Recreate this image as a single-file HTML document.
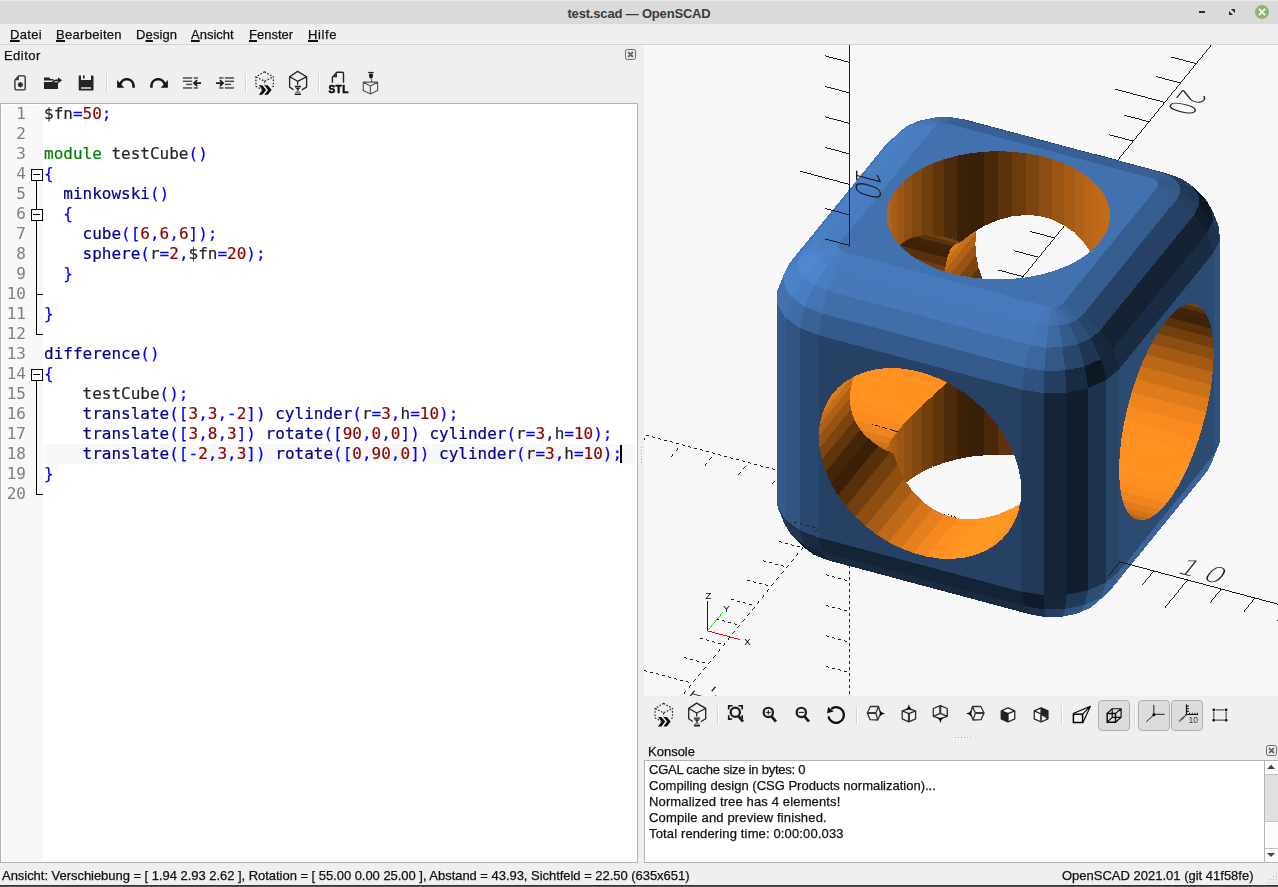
<!DOCTYPE html>
<html lang="de">
<head>
<meta charset="utf-8">
<title>test.scad — OpenSCAD</title>
<style>
html,body{margin:0;padding:0;}
body{width:1278px;height:887px;overflow:hidden;position:relative;background:#efefef;font-family:"Liberation Sans","DejaVu Sans",sans-serif;font-size:13px;color:#1a1a1a;}
.abs{position:absolute;}
.t{position:absolute;white-space:pre;line-height:16px;height:16px;will-change:transform;-webkit-text-stroke:0.25px #111;color:#111;}
#titlebar{left:0;top:0;width:1278px;height:24px;background:#dadada;}
#titlebar .hl{position:absolute;left:0;top:0;width:1278px;height:1px;background:#ebebeb;}
#title{will-change:auto;-webkit-text-stroke:0;left:0;width:1278px;top:6px;letter-spacing:-0.18px;text-align:center;font-weight:bold;color:#3a3a3a;font-size:13px;}
#menubar{left:0;top:24px;width:1278px;height:20px;background:#efefef;border-bottom:1px solid #d2d2d2;}
.menu{top:27px;}
u{text-decoration:underline;text-underline-offset:0.5px;text-decoration-thickness:1.5px;}
#edbox{left:0;top:103px;width:636px;height:758px;border:1px solid #b2b2b2;background:#fff;}
#gutter{left:2px;top:105px;width:41px;height:756px;background:#f8f8f8;}
.ln{position:absolute;left:2px;width:24px;text-align:right;height:20px;line-height:20px;font-family:"DejaVu Sans Mono","Liberation Mono",monospace;font-size:16px;color:#808080;}
.cl{position:absolute;left:44px;height:20px;line-height:20px;white-space:pre;font-family:"DejaVu Sans Mono","Liberation Mono",monospace;font-size:16px;color:#262626;-webkit-text-stroke:0.2px #262626;}
.k{color:#008000;-webkit-text-stroke:0.2px #008000;}
.f{color:#00008b;-webkit-text-stroke:0.2px #00008b;}
.o{color:#0000ff;-webkit-text-stroke:0.2px #0000ff;}
.n{color:#8b0000;-webkit-text-stroke:0.2px #8b0000;}
#curline{left:44px;top:444px;width:592px;height:20px;background:#f8f8f8;}
#caret{left:620px;top:445px;width:2px;height:18px;background:#000;}
#view{left:644px;top:45px;width:635px;height:651px;background:#f8f8f8;overflow:hidden;will-change:transform;}
#conbox{left:644px;top:760px;width:620px;height:101px;border:1px solid #b2b2b2;background:#fff;}
.con{left:649px;}
#status{left:0;top:864px;width:1278px;height:20px;}
#shadow{left:0;top:885px;width:1278px;height:2px;background:linear-gradient(#363636,#363636 50%,#545454 50%,#545454);}
</style>
</head>
<body>
<!-- title bar -->
<div id="titlebar" class="abs"><div class="hl"></div></div>
<div id="title" class="t">test.scad — OpenSCAD</div>
<!-- menu bar -->
<div id="menubar" class="abs"></div>
<div class="t menu" style="left:10px;letter-spacing:0.3px"><u>D</u>atei</div>
<div class="t menu" style="left:56px;letter-spacing:0.3px"><u>B</u>earbeiten</div>
<div class="t menu" style="left:136px;letter-spacing:0.12px">D<u>e</u>sign</div>
<div class="t menu" style="left:191px"><u>A</u>nsicht</div>
<div class="t menu" style="left:249px"><u>F</u>enster</div>
<div class="t menu" style="left:308px;letter-spacing:0.6px"><u>H</u>ilfe</div>
<!-- editor dock -->
<div class="t" style="left:3.5px;top:48px;letter-spacing:0.45px">Editor</div>
<div id="edbox" class="abs"></div>
<div id="gutter" class="abs"></div>
<div id="curline" class="abs"></div>
<div id="code" style="position:absolute;left:0;top:0;width:640px;height:864px;will-change:transform">
<div class="ln" style="top:104px">1</div>
<div class="cl" style="top:104px">$fn<span class="o">=</span><span class="n">50</span><span class="o">;</span></div>
<div class="ln" style="top:124px">2</div>
<div class="ln" style="top:144px">3</div>
<div class="cl" style="top:144px"><span class="k">module </span>testCube<span class="o">()</span></div>
<div class="ln" style="top:164px">4</div>
<div class="cl" style="top:164px"><span class="o">{</span></div>
<div class="ln" style="top:184px">5</div>
<div class="cl" style="top:184px">  <span class="f">minkowski</span><span class="o">()</span></div>
<div class="ln" style="top:204px">6</div>
<div class="cl" style="top:204px">  <span class="o">{</span></div>
<div class="ln" style="top:224px">7</div>
<div class="cl" style="top:224px">    <span class="f">cube</span><span class="o">([</span><span class="n">6</span><span class="o">,</span><span class="n">6</span><span class="o">,</span><span class="n">6</span><span class="o">]);</span></div>
<div class="ln" style="top:244px">8</div>
<div class="cl" style="top:244px">    <span class="f">sphere</span><span class="o">(</span>r<span class="o">=</span><span class="n">2</span><span class="o">,</span>$fn<span class="o">=</span><span class="n">20</span><span class="o">);</span></div>
<div class="ln" style="top:264px">9</div>
<div class="cl" style="top:264px">  <span class="o">}</span></div>
<div class="ln" style="top:284px">10</div>
<div class="ln" style="top:304px">11</div>
<div class="cl" style="top:304px"><span class="o">}</span></div>
<div class="ln" style="top:324px">12</div>
<div class="ln" style="top:344px">13</div>
<div class="cl" style="top:344px"><span class="f">difference</span><span class="o">()</span></div>
<div class="ln" style="top:364px">14</div>
<div class="cl" style="top:364px"><span class="o">{</span></div>
<div class="ln" style="top:384px">15</div>
<div class="cl" style="top:384px">    testCube<span class="o">();</span></div>
<div class="ln" style="top:404px">16</div>
<div class="cl" style="top:404px">    <span class="f">translate</span><span class="o">([</span><span class="n">3</span><span class="o">,</span><span class="n">3</span><span class="o">,-</span><span class="n">2</span><span class="o">]) </span><span class="f">cylinder</span><span class="o">(</span>r<span class="o">=</span><span class="n">3</span><span class="o">,</span>h<span class="o">=</span><span class="n">10</span><span class="o">);</span></div>
<div class="ln" style="top:424px">17</div>
<div class="cl" style="top:424px">    <span class="f">translate</span><span class="o">([</span><span class="n">3</span><span class="o">,</span><span class="n">8</span><span class="o">,</span><span class="n">3</span><span class="o">]) </span><span class="f">rotate</span><span class="o">([</span><span class="n">90</span><span class="o">,</span><span class="n">0</span><span class="o">,</span><span class="n">0</span><span class="o">]) </span><span class="f">cylinder</span><span class="o">(</span>r<span class="o">=</span><span class="n">3</span><span class="o">,</span>h<span class="o">=</span><span class="n">10</span><span class="o">);</span></div>
<div class="ln" style="top:444px">18</div>
<div class="cl" style="top:444px">    <span class="f">translate</span><span class="o">([-</span><span class="n">2</span><span class="o">,</span><span class="n">3</span><span class="o">,</span><span class="n">3</span><span class="o">]) </span><span class="f">rotate</span><span class="o">([</span><span class="n">0</span><span class="o">,</span><span class="n">90</span><span class="o">,</span><span class="n">0</span><span class="o">]) </span><span class="f">cylinder</span><span class="o">(</span>r<span class="o">=</span><span class="n">3</span><span class="o">,</span>h<span class="o">=</span><span class="n">10</span><span class="o">);</span></div>
<div class="ln" style="top:464px">19</div>
<div class="cl" style="top:464px"><span class="o">}</span></div>
<div class="ln" style="top:484px">20</div>
</div>
<div id="caret" class="abs"></div>
<!-- 3D view -->
<div id="view" class="abs">
<svg width="635" height="651" viewBox="0 0 635 651" shape-rendering="crispEdges" style="position:absolute;left:0;top:0;display:block">
<rect width="635" height="651" fill="#f8f8f8"/>
<g id="holes">
<polygon fill="#dd7a1c" stroke="#dd7a1c" stroke-width="2" points="455.7,197.4 460.8,189.9 464.2,182.1 465.9,174.1 465.9,166.1 464.1,158.1 460.5,150.3 455.3,142.8 448.5,135.8 440.2,129.3 430.6,123.4 419.8,118.3 407.9,114 395.2,110.6 381.8,108.2 368,106.7 354,106.2 340,106.7 326.2,108.3 312.9,110.8 300.2,114.2 288.4,118.6 277.6,123.7 268,129.6 259.8,136.1 253.1,143.2 248,150.7 244.5,158.5 242.8,166.5 242.9,174.6 244.7,182.5 248.2,190.3 253.4,197.8 260.2,204.8 268.5,211.3 278.2,217.2 289,222.3 300.9,226.6 313.6,230 327,232.4 340.8,233.9 354.8,234.4 368.8,233.9 382.6,232.3 395.9,229.8 408.6,226.4 420.4,222 431.2,216.9 440.7,211 449,204.5"/>
<path fill="#c26b19" stroke="#c26b19" stroke-width="1.6" stroke-linejoin="round" fill-rule="evenodd" d="M465.12,157.62L464.12,158.38L464.12,182.38L465.12,182.88L466.88,175.62L466.88,164.62Z"/>
<path fill="#c36b19" stroke="#c36b19" stroke-width="1.6" stroke-linejoin="round" fill-rule="evenodd" d="M461.88,149.88L460.62,150.62L460.62,190.38L461.62,191.38L465.12,183.38L464.88,182.88L463.88,182.38L463.88,158.38L465.12,157.38L465.12,156.88Z"/>
<path fill="#c16a18" stroke="#c16a18" stroke-width="1.6" stroke-linejoin="round" fill-rule="evenodd" d="M456.12,141.88L455.38,142.88L455.38,197.88L456.38,198.62L461.38,191.62L460.38,190.38L460.38,150.62L461.62,149.38L456.62,142.12Z"/>
<path fill="#be6818" stroke="#be6818" stroke-width="1.6" stroke-linejoin="round" fill-rule="evenodd" d="M449.12,134.38L448.62,135.38L448.62,204.88L449.62,205.62L456.12,198.88L455.12,197.88L455.12,142.88L456.12,141.62Z"/>
<path fill="#b86517" stroke="#b86517" stroke-width="1.6" stroke-linejoin="round" fill-rule="evenodd" d="M441.12,128.38L440.38,129.62L440.38,198.38L444.88,204.62L446.12,206.88L447.12,207.62L449.38,205.88L448.38,204.88L448.38,135.38L448.88,134.38Z"/>
<path fill="#b06116" stroke="#b06116" stroke-width="1.6" stroke-linejoin="round" fill-rule="evenodd" d="M431.38,122.38L430.62,123.62L430.62,188.12L440.12,198.12L440.12,129.62L440.88,128.12Z"/>
<path fill="#a65b15" stroke="#a65b15" stroke-width="1.6" stroke-linejoin="round" fill-rule="evenodd" d="M420.12,117.12L419.88,117.38L419.88,180.12L430.38,187.88L430.38,123.62L431.12,122.12Z"/>
<path fill="#9a5513" stroke="#9a5513" stroke-width="1.6" stroke-linejoin="round" fill-rule="evenodd" d="M408.12,112.88L408.12,174.38L419.62,180.12L419.62,117.38L419.88,117.12Z"/>
<path fill="#8c4d12" stroke="#8c4d12" stroke-width="1.6" stroke-linejoin="round" fill-rule="evenodd" d="M396.12,109.62L395.38,110.88L395.38,171.12L407.88,174.38L407.88,112.88Z"/>
<path fill="#7d4510" stroke="#7d4510" stroke-width="1.6" stroke-linejoin="round" fill-rule="evenodd" d="M382.38,107.12L381.88,107.88L381.88,169.88L395.12,170.88L395.12,110.88L395.88,109.62Z"/>
<path fill="#6d3c0e" stroke="#6d3c0e" stroke-width="1.6" stroke-linejoin="round" fill-rule="evenodd" d="M368.12,105.62L368.12,171.38L381.12,170.12L381.62,169.88L381.62,107.88L382.12,107.12Z"/>
<path fill="#5c330c" stroke="#5c330c" stroke-width="1.6" stroke-linejoin="round" fill-rule="evenodd" d="M367.88,105.62L354.12,105.12L354.12,175.12L367.88,171.38Z"/>
<path fill="#4a2909" stroke="#4a2909" stroke-width="1.6" stroke-linejoin="round" fill-rule="evenodd" d="M353.88,105.12L340.12,105.62L340.12,181.12L353.88,175.12Z"/>
<path fill="#381f07" stroke="#381f07" stroke-width="1.6" stroke-linejoin="round" fill-rule="evenodd" d="M339.88,105.62L326.38,107.12L326.38,189.38L339.88,181.12Z"/>
<path fill="#3c2108" stroke="#3c2108" stroke-width="1.6" stroke-linejoin="round" fill-rule="evenodd" d="M326.12,107.12L313.12,109.62L313.12,195.88L315.88,197.12L317.12,196.62L326.12,189.62Z"/>
<path fill="#4e2b0a" stroke="#4e2b0a" stroke-width="1.6" stroke-linejoin="round" fill-rule="evenodd" d="M312.88,109.62L300.12,112.88L300.38,113.38L300.38,191.88L312.12,195.62L312.88,195.62Z"/>
<path fill="#60350c" stroke="#60350c" stroke-width="1.6" stroke-linejoin="round" fill-rule="evenodd" d="M299.62,112.88L288.38,117.12L288.62,117.62L288.62,190.12L300.12,191.88L300.12,113.38Z"/>
<path fill="#713e0e" stroke="#713e0e" stroke-width="1.6" stroke-linejoin="round" fill-rule="evenodd" d="M288.12,117.38L277.12,122.38L277.62,123.38L277.62,190.38L288.38,190.12L288.38,117.62Z"/>
<path fill="#814710" stroke="#814710" stroke-width="1.6" stroke-linejoin="round" fill-rule="evenodd" d="M276.88,122.62L267.12,128.62L268.12,129.62L268.12,192.62L277.38,190.38L277.38,123.38Z"/>
<path fill="#8f4f12" stroke="#8f4f12" stroke-width="1.6" stroke-linejoin="round" fill-rule="evenodd" d="M267.12,128.88L266.38,129.12L258.88,135.12L259.88,136.12L259.88,196.88L267.88,192.62L267.88,129.62Z"/>
<path fill="#9d5614" stroke="#9d5614" stroke-width="1.6" stroke-linejoin="round" fill-rule="evenodd" d="M258.88,135.38L252.12,142.12L253.12,143.38L253.12,197.12L251.88,198.12L255.12,201.62L259.62,197.12L259.62,136.12Z"/>
<path fill="#a85d15" stroke="#a85d15" stroke-width="1.6" stroke-linejoin="round" fill-rule="evenodd" d="M251.88,142.38L246.62,150.12L248.12,150.88L248.12,189.62L246.62,190.38L251.62,197.88L252.12,197.88L252.88,197.12L252.88,143.38Z"/>
<path fill="#b26216" stroke="#b26216" stroke-width="1.6" stroke-linejoin="round" fill-rule="evenodd" d="M246.62,150.38L243.38,158.38L244.62,159.12L244.62,181.38L243.38,182.12L243.38,182.88L246.38,189.88L246.88,190.12L247.88,189.62L247.88,150.88Z"/>
<path fill="#b96617" stroke="#b96617" stroke-width="1.6" stroke-linejoin="round" fill-rule="evenodd" d="M243.38,158.62L241.88,165.12L241.88,176.12L242.38,177.38L243.12,181.88L244.38,181.38L244.38,159.12Z"/>
<path fill="#ec821e" stroke="#ec821e" stroke-width="1.6" stroke-linejoin="round" fill-rule="evenodd" d="M312.88,198.38L310.88,199.38L306.88,203.62L304.62,208.38Z"/>
<path fill="#da781c" stroke="#da781c" stroke-width="1.6" stroke-linejoin="round" fill-rule="evenodd" d="M320.38,194.12L316.38,197.38L313.38,198.12L304.62,208.62L303.88,210.12L303.12,213.88L302.12,216.62Z"/>
<path fill="#c56d19" stroke="#c56d19" stroke-width="1.6" stroke-linejoin="round" fill-rule="evenodd" d="M332.38,185.88L325.88,189.88L320.12,194.62L302.62,216.12L301.88,217.62L301.88,219.88L300.88,225.88L332.12,187.38Z"/>
<path fill="#af6016" stroke="#af6016" stroke-width="1.6" stroke-linejoin="round" fill-rule="evenodd" d="M332.12,187.62L300.88,226.12L300.38,227.88L306.62,229.38L307.88,227.38L331.38,198.62Z"/>
<path fill="#965313" stroke="#965313" stroke-width="1.6" stroke-linejoin="round" fill-rule="evenodd" d="M331.38,198.88L308.12,227.38L306.88,229.38L313.38,231.12L315.88,231.38L315.88,230.38L332.12,210.38Z"/>
<path fill="#7c4410" stroke="#7c4410" stroke-width="1.6" stroke-linejoin="round" fill-rule="evenodd" d="M332.12,210.62L316.12,230.38L316.12,231.62L325.62,233.38L334.12,222.88L334.38,221.12Z"/>
<path fill="#60350c" stroke="#60350c" stroke-width="1.6" stroke-linejoin="round" fill-rule="evenodd" d="M334.62,222.38L325.88,233.38L338.12,234.62L338.12,233.12Z"/>
<path fill="#733f0f" stroke="#733f0f" stroke-width="1.6" stroke-linejoin="round" fill-rule="evenodd" d="M271.38,214.62L276.12,217.62L287.88,223.38L299.62,227.62L300.12,227.62L300.62,226.88L300.62,225.12L301.38,221.38L276.38,214.88L275.38,214.38L273.38,213.88L272.62,214.12L272.38,213.62Z"/>
<path fill="#58310b" stroke="#58310b" stroke-width="1.6" stroke-linejoin="round" fill-rule="evenodd" d="M255.38,201.62L255.62,202.38L259.62,206.38L267.88,212.62L270.88,214.38L271.38,214.38L272.38,213.38L272.62,213.88L273.38,213.62L275.38,214.12L276.38,214.62L301.38,221.12L301.88,216.38L303.12,212.88L261.12,201.88L257.38,200.62L256.38,200.62Z"/>
<path fill="#3d2208" stroke="#3d2208" stroke-width="1.6" stroke-linejoin="round" fill-rule="evenodd" d="M256.62,200.38L302.38,212.62L303.12,212.62L303.88,209.38L305.62,206.12L264.38,195.12L263.62,195.12L259.88,197.12Z"/>
<path fill="#402308" stroke="#402308" stroke-width="1.6" stroke-linejoin="round" fill-rule="evenodd" d="M264.12,194.88L304.88,205.88L305.88,205.62L306.62,203.62L308.62,201.38L308.62,201.12L276.88,192.88L273.12,191.62L267.88,192.88Z"/>
<path fill="#5b320c" stroke="#5b320c" stroke-width="1.6" stroke-linejoin="round" fill-rule="evenodd" d="M273.38,191.62L308.88,201.12L310.88,199.12L312.62,198.38L312.62,198.12L283.62,190.38L276.88,190.62Z"/>
<path fill="#75410f" stroke="#75410f" stroke-width="1.6" stroke-linejoin="round" fill-rule="evenodd" d="M283.88,190.38L312.88,198.12L314.62,197.38L315.88,197.38L312.88,195.88L310.12,195.38L295.88,191.38L289.62,190.38Z"/>
<path fill="#8f4f12" stroke="#8f4f12" stroke-width="1.6" stroke-linejoin="round" fill-rule="evenodd" d="M298.12,191.88L307.88,194.38L301.38,192.38Z"/>
<path fill="#f8f8f8" stroke="#f8f8f8" stroke-width="1.6" stroke-linejoin="round" fill-rule="evenodd" d="M446.62,207.62L440.62,198.88L430.12,187.88L420.62,180.88L408.12,174.62L395.12,171.12L381.38,170.12L381.12,170.38L367.38,171.62L353.62,175.38L339.88,181.38L332.62,185.88L332.38,186.88L331.88,195.88L331.62,196.12L331.62,201.38L331.88,201.62L332.38,210.88L334.62,222.12L338.38,233.12L338.38,234.62L338.88,234.88L350.38,235.12L350.62,235.38L370.88,234.88L371.12,234.62L384.12,233.38L399.12,230.38L404.62,228.62L409.12,227.62L421.62,223.12L433.88,216.88L441.38,212.12L445.88,208.62Z"/>
<path fill="#c26b19" fill-rule="evenodd" d="M465.12,157.62L464.12,158.38L464.12,182.38L465.12,182.88L466.88,175.62L466.88,164.62Z"/>
<path fill="#c36b19" fill-rule="evenodd" d="M461.88,149.88L460.62,150.62L460.62,190.38L461.62,191.38L465.12,183.38L464.88,182.88L463.88,182.38L463.88,158.38L465.12,157.38L465.12,156.88Z"/>
<path fill="#c16a18" fill-rule="evenodd" d="M456.12,141.88L455.38,142.88L455.38,197.88L456.38,198.62L461.38,191.62L460.38,190.38L460.38,150.62L461.62,149.38L456.62,142.12Z"/>
<path fill="#be6818" fill-rule="evenodd" d="M449.12,134.38L448.62,135.38L448.62,204.88L449.62,205.62L456.12,198.88L455.12,197.88L455.12,142.88L456.12,141.62Z"/>
<path fill="#b86517" fill-rule="evenodd" d="M441.12,128.38L440.38,129.62L440.38,198.38L444.88,204.62L446.12,206.88L447.12,207.62L449.38,205.88L448.38,204.88L448.38,135.38L448.88,134.38Z"/>
<path fill="#b06116" fill-rule="evenodd" d="M431.38,122.38L430.62,123.62L430.62,188.12L440.12,198.12L440.12,129.62L440.88,128.12Z"/>
<path fill="#a65b15" fill-rule="evenodd" d="M420.12,117.12L419.88,117.38L419.88,180.12L430.38,187.88L430.38,123.62L431.12,122.12Z"/>
<path fill="#9a5513" fill-rule="evenodd" d="M408.12,112.88L408.12,174.38L419.62,180.12L419.62,117.38L419.88,117.12Z"/>
<path fill="#8c4d12" fill-rule="evenodd" d="M396.12,109.62L395.38,110.88L395.38,171.12L407.88,174.38L407.88,112.88Z"/>
<path fill="#7d4510" fill-rule="evenodd" d="M382.38,107.12L381.88,107.88L381.88,169.88L395.12,170.88L395.12,110.88L395.88,109.62Z"/>
<path fill="#6d3c0e" fill-rule="evenodd" d="M368.12,105.62L368.12,171.38L381.12,170.12L381.62,169.88L381.62,107.88L382.12,107.12Z"/>
<path fill="#5c330c" fill-rule="evenodd" d="M367.88,105.62L354.12,105.12L354.12,175.12L367.88,171.38Z"/>
<path fill="#4a2909" fill-rule="evenodd" d="M353.88,105.12L340.12,105.62L340.12,181.12L353.88,175.12Z"/>
<path fill="#381f07" fill-rule="evenodd" d="M339.88,105.62L326.38,107.12L326.38,189.38L339.88,181.12Z"/>
<path fill="#3c2108" fill-rule="evenodd" d="M326.12,107.12L313.12,109.62L313.12,195.88L315.88,197.12L317.12,196.62L326.12,189.62Z"/>
<path fill="#4e2b0a" fill-rule="evenodd" d="M312.88,109.62L300.12,112.88L300.38,113.38L300.38,191.88L312.12,195.62L312.88,195.62Z"/>
<path fill="#60350c" fill-rule="evenodd" d="M299.62,112.88L288.38,117.12L288.62,117.62L288.62,190.12L300.12,191.88L300.12,113.38Z"/>
<path fill="#713e0e" fill-rule="evenodd" d="M288.12,117.38L277.12,122.38L277.62,123.38L277.62,190.38L288.38,190.12L288.38,117.62Z"/>
<path fill="#814710" fill-rule="evenodd" d="M276.88,122.62L267.12,128.62L268.12,129.62L268.12,192.62L277.38,190.38L277.38,123.38Z"/>
<path fill="#8f4f12" fill-rule="evenodd" d="M267.12,128.88L266.38,129.12L258.88,135.12L259.88,136.12L259.88,196.88L267.88,192.62L267.88,129.62Z"/>
<path fill="#9d5614" fill-rule="evenodd" d="M258.88,135.38L252.12,142.12L253.12,143.38L253.12,197.12L251.88,198.12L255.12,201.62L259.62,197.12L259.62,136.12Z"/>
<path fill="#a85d15" fill-rule="evenodd" d="M251.88,142.38L246.62,150.12L248.12,150.88L248.12,189.62L246.62,190.38L251.62,197.88L252.12,197.88L252.88,197.12L252.88,143.38Z"/>
<path fill="#b26216" fill-rule="evenodd" d="M246.62,150.38L243.38,158.38L244.62,159.12L244.62,181.38L243.38,182.12L243.38,182.88L246.38,189.88L246.88,190.12L247.88,189.62L247.88,150.88Z"/>
<path fill="#b96617" fill-rule="evenodd" d="M243.38,158.62L241.88,165.12L241.88,176.12L242.38,177.38L243.12,181.88L244.38,181.38L244.38,159.12Z"/>
<path fill="#ec821e" fill-rule="evenodd" d="M312.88,198.38L310.88,199.38L306.88,203.62L304.62,208.38Z"/>
<path fill="#da781c" fill-rule="evenodd" d="M320.38,194.12L316.38,197.38L313.38,198.12L304.62,208.62L303.88,210.12L303.12,213.88L302.12,216.62Z"/>
<path fill="#c56d19" fill-rule="evenodd" d="M332.38,185.88L325.88,189.88L320.12,194.62L302.62,216.12L301.88,217.62L301.88,219.88L300.88,225.88L332.12,187.38Z"/>
<path fill="#af6016" fill-rule="evenodd" d="M332.12,187.62L300.88,226.12L300.38,227.88L306.62,229.38L307.88,227.38L331.38,198.62Z"/>
<path fill="#965313" fill-rule="evenodd" d="M331.38,198.88L308.12,227.38L306.88,229.38L313.38,231.12L315.88,231.38L315.88,230.38L332.12,210.38Z"/>
<path fill="#7c4410" fill-rule="evenodd" d="M332.12,210.62L316.12,230.38L316.12,231.62L325.62,233.38L334.12,222.88L334.38,221.12Z"/>
<path fill="#60350c" fill-rule="evenodd" d="M334.62,222.38L325.88,233.38L338.12,234.62L338.12,233.12Z"/>
<path fill="#733f0f" fill-rule="evenodd" d="M271.38,214.62L276.12,217.62L287.88,223.38L299.62,227.62L300.12,227.62L300.62,226.88L300.62,225.12L301.38,221.38L276.38,214.88L275.38,214.38L273.38,213.88L272.62,214.12L272.38,213.62Z"/>
<path fill="#58310b" fill-rule="evenodd" d="M255.38,201.62L255.62,202.38L259.62,206.38L267.88,212.62L270.88,214.38L271.38,214.38L272.38,213.38L272.62,213.88L273.38,213.62L275.38,214.12L276.38,214.62L301.38,221.12L301.88,216.38L303.12,212.88L261.12,201.88L257.38,200.62L256.38,200.62Z"/>
<path fill="#3d2208" fill-rule="evenodd" d="M256.62,200.38L302.38,212.62L303.12,212.62L303.88,209.38L305.62,206.12L264.38,195.12L263.62,195.12L259.88,197.12Z"/>
<path fill="#402308" fill-rule="evenodd" d="M264.12,194.88L304.88,205.88L305.88,205.62L306.62,203.62L308.62,201.38L308.62,201.12L276.88,192.88L273.12,191.62L267.88,192.88Z"/>
<path fill="#5b320c" fill-rule="evenodd" d="M273.38,191.62L308.88,201.12L310.88,199.12L312.62,198.38L312.62,198.12L283.62,190.38L276.88,190.62Z"/>
<path fill="#75410f" fill-rule="evenodd" d="M283.88,190.38L312.88,198.12L314.62,197.38L315.88,197.38L312.88,195.88L310.12,195.38L295.88,191.38L289.62,190.38Z"/>
<path fill="#8f4f12" fill-rule="evenodd" d="M298.12,191.88L307.88,194.38L301.38,192.38Z"/>
<path fill="#f8f8f8" fill-rule="evenodd" d="M446.62,207.62L440.62,198.88L430.12,187.88L420.62,180.88L408.12,174.62L395.12,171.12L381.38,170.12L381.12,170.38L367.38,171.62L353.62,175.38L339.88,181.38L332.62,185.88L332.38,186.88L331.88,195.88L331.62,196.12L331.62,201.38L331.88,201.62L332.38,210.88L334.62,222.12L338.38,233.12L338.38,234.62L338.88,234.88L350.38,235.12L350.62,235.38L370.88,234.88L371.12,234.62L384.12,233.38L399.12,230.38L404.62,228.62L409.12,227.62L421.62,223.12L433.88,216.88L441.38,212.12L445.88,208.62Z"/>
<polygon fill="#dd7a1c" stroke="#dd7a1c" stroke-width="2" points="377.3,445.6 376.5,433.9 374.2,421.9 370.2,410 364.8,398.1 358,386.6 349.9,375.5 340.6,365.2 330.3,355.7 319.2,347.2 307.4,339.8 295,333.6 282.4,328.8 269.7,325.4 257.1,323.5 244.8,323 232.9,324.1 221.8,326.7 211.5,330.7 202.2,336.1 194.1,342.7 187.3,350.6 181.9,359.6 178,369.5 175.6,380.1 174.8,391.4 175.6,403.1 178,415 181.9,427 187.3,438.8 194.1,450.4 202.2,461.4 211.5,471.7 221.8,481.2 232.9,489.8 244.8,497.2 257.1,503.3 269.7,508.1 282.4,511.5 295,513.5 307.4,513.9 319.2,512.8 330.3,510.3 340.6,506.3 349.9,500.9 358,494.2 364.8,486.3 370.2,477.3 374.2,467.5 376.5,456.8"/>
<path fill="#6d3c0e" stroke="#6d3c0e" stroke-width="1.6" stroke-linejoin="round" fill-rule="evenodd" d="M369.12,404.62L368.12,405.38L368.12,410.12L370.38,410.38L371.38,409.38Z"/>
<path fill="#5c330c" stroke="#5c330c" stroke-width="1.6" stroke-linejoin="round" fill-rule="evenodd" d="M354.88,380.38L354.12,381.38L354.12,409.62L367.88,410.12L367.88,405.38L369.12,404.12L365.38,396.12L359.12,385.88Z"/>
<path fill="#4a2909" stroke="#4a2909" stroke-width="1.6" stroke-linejoin="round" fill-rule="evenodd" d="M341.12,363.62L340.12,364.88L340.12,410.12L346.38,410.12L346.62,409.88L353.88,409.62L353.88,381.38L354.88,380.12L351.12,374.88Z"/>
<path fill="#381f07" stroke="#381f07" stroke-width="1.6" stroke-linejoin="round" fill-rule="evenodd" d="M327.12,351.38L326.38,352.88L326.38,411.88L326.62,411.62L339.88,410.38L339.88,364.88L340.88,363.62L333.12,356.12Z"/>
<path fill="#3c2108" stroke="#3c2108" stroke-width="1.6" stroke-linejoin="round" fill-rule="evenodd" d="M314.12,342.38L313.62,342.62L313.12,343.62L313.12,414.38L317.12,413.38L326.12,411.88L326.12,352.88L326.88,351.12L319.88,345.88Z"/>
<path fill="#4e2b0a" stroke="#4e2b0a" stroke-width="1.6" stroke-linejoin="round" fill-rule="evenodd" d="M304.12,336.62L303.62,336.88L303.12,337.88L300.38,340.12L300.38,417.62L312.88,414.38L312.88,343.62L313.62,342.12L308.12,338.62Z"/>
<path fill="#60350c" stroke="#60350c" stroke-width="1.6" stroke-linejoin="round" fill-rule="evenodd" d="M300.12,340.38L288.62,350.62L288.62,422.12L300.12,417.88Z"/>
<path fill="#713e0e" stroke="#713e0e" stroke-width="1.6" stroke-linejoin="round" fill-rule="evenodd" d="M288.38,350.88L277.62,360.88L277.62,427.12L288.38,422.12Z"/>
<path fill="#814710" stroke="#814710" stroke-width="1.6" stroke-linejoin="round" fill-rule="evenodd" d="M277.38,361.12L268.12,370.12L268.12,433.12L277.38,427.38Z"/>
<path fill="#8f4f12" stroke="#8f4f12" stroke-width="1.6" stroke-linejoin="round" fill-rule="evenodd" d="M267.88,370.38L259.88,378.88L259.88,433.12L262.62,437.38L267.88,433.38Z"/>
<path fill="#9d5614" stroke="#9d5614" stroke-width="1.6" stroke-linejoin="round" fill-rule="evenodd" d="M259.62,379.12L253.12,386.62L253.12,419.12L259.62,432.62Z"/>
<path fill="#a85d15" stroke="#a85d15" stroke-width="1.6" stroke-linejoin="round" fill-rule="evenodd" d="M252.88,387.12L248.12,393.38L248.12,407.88L249.38,408.38L249.88,409.12L252.88,418.38Z"/>
<path fill="#b26216" stroke="#b26216" stroke-width="1.6" stroke-linejoin="round" fill-rule="evenodd" d="M247.88,393.62L244.62,398.88L244.62,406.38L247.88,407.88Z"/>
<path fill="#b96617" stroke="#b96617" stroke-width="1.6" stroke-linejoin="round" fill-rule="evenodd" d="M244.38,399.62L242.88,403.38L242.88,405.62L244.38,406.12Z"/>
<path fill="#ec821e" stroke="#ec821e" stroke-width="1.6" stroke-linejoin="round" fill-rule="evenodd" d="M197.12,338.38L192.38,342.38L186.12,349.88L181.12,358.12L181.38,358.62L181.88,358.88L182.62,358.62L197.88,339.88Z"/>
<path fill="#da781c" stroke="#da781c" stroke-width="1.6" stroke-linejoin="round" fill-rule="evenodd" d="M206.88,331.88L201.38,334.88L197.38,338.12L198.12,339.88L182.88,358.62L182.38,359.12L180.88,358.62L176.88,368.12L177.12,369.12L178.12,369.12L206.88,333.88L207.38,333.12Z"/>
<path fill="#c56d19" stroke="#c56d19" stroke-width="1.6" stroke-linejoin="round" fill-rule="evenodd" d="M209.38,330.38L207.12,331.62L207.62,332.62L207.12,333.88L178.12,369.38L176.62,369.12L174.62,378.62L174.88,379.38L175.88,379.62L206.62,341.88L207.38,340.38L208.38,335.88L209.88,331.62Z"/>
<path fill="#af6016" stroke="#af6016" stroke-width="1.6" stroke-linejoin="round" fill-rule="evenodd" d="M207.12,341.38L175.88,379.88L174.62,379.38L173.88,391.12L174.88,391.12L205.88,353.12L206.12,347.38Z"/>
<path fill="#965313" stroke="#965313" stroke-width="1.6" stroke-linejoin="round" fill-rule="evenodd" d="M205.88,353.38L174.88,391.38L173.88,391.38L174.62,402.88L175.62,402.88L207.12,364.12L206.12,358.88Z"/>
<path fill="#7c4410" stroke="#7c4410" stroke-width="1.6" stroke-linejoin="round" fill-rule="evenodd" d="M207.12,364.38L175.62,403.12L174.62,403.12L174.62,404.62L176.38,412.62L176.62,415.12L178.12,414.62L210.12,375.38L210.38,374.12L208.62,370.12Z"/>
<path fill="#60350c" stroke="#60350c" stroke-width="1.6" stroke-linejoin="round" fill-rule="evenodd" d="M210.62,374.88L178.12,414.88L176.88,415.38L176.88,416.12L180.88,427.62L181.88,427.12L184.38,423.62L215.88,385.12L216.12,384.12L213.12,379.88Z"/>
<path fill="#442509" stroke="#442509" stroke-width="1.6" stroke-linejoin="round" fill-rule="evenodd" d="M216.38,384.62L184.62,423.62L182.12,427.12L180.88,427.88L186.12,439.12L187.88,438.12L224.12,393.38L219.12,388.12Z"/>
<path fill="#3b2007" stroke="#3b2007" stroke-width="1.6" stroke-linejoin="round" fill-rule="evenodd" d="M224.38,393.38L187.38,438.88L186.12,439.38L192.88,450.88L194.12,450.38L234.12,401.12L233.62,400.38L228.62,397.12Z"/>
<path fill="#57300b" stroke="#57300b" stroke-width="1.6" stroke-linejoin="round" fill-rule="evenodd" d="M239.38,404.12L234.38,401.12L194.38,450.38L192.88,451.12L201.12,462.38L246.12,407.38Z"/>
<path fill="#733f0f" stroke="#733f0f" stroke-width="1.6" stroke-linejoin="round" fill-rule="evenodd" d="M249.38,408.62L246.38,407.38L245.12,408.62L205.12,458.12L201.38,462.38L202.62,464.12L210.38,472.38L212.38,470.62L253.38,420.12Z"/>
<path fill="#8e4e12" stroke="#8e4e12" stroke-width="1.6" stroke-linejoin="round" fill-rule="evenodd" d="M253.38,420.38L214.88,467.88L210.62,472.62L220.88,482.12L221.88,481.38L221.88,480.88L259.88,434.38L260.12,433.88Z"/>
<path fill="#a75c15" stroke="#a75c15" stroke-width="1.6" stroke-linejoin="round" fill-rule="evenodd" d="M260.12,434.12L221.12,482.38L232.12,491.12L233.62,488.62L268.38,446.12Z"/>
<path fill="#be6918" stroke="#be6918" stroke-width="1.6" stroke-linejoin="round" fill-rule="evenodd" d="M268.62,446.12L233.12,489.62L232.62,491.38L243.88,498.12L277.88,456.38L277.88,455.88Z"/>
<path fill="#d4751b" stroke="#d4751b" stroke-width="1.6" stroke-linejoin="round" fill-rule="evenodd" d="M288.88,464.12L278.12,456.12L244.38,497.62L244.12,498.38L256.38,504.38L259.62,499.88Z"/>
<path fill="#e67f1d" stroke="#e67f1d" stroke-width="1.6" stroke-linejoin="round" fill-rule="evenodd" d="M300.62,469.88L289.12,464.12L257.88,502.38L256.62,504.62L268.88,509.12Z"/>
<path fill="#f6881f" stroke="#f6881f" stroke-width="1.6" stroke-linejoin="round" fill-rule="evenodd" d="M313.38,473.12L300.88,469.88L271.12,506.38L269.12,509.38L273.62,510.38L279.12,512.12L282.12,512.62L282.38,511.38Z"/>
<path fill="#ff8f21" stroke="#ff8f21" stroke-width="1.6" stroke-linejoin="round" fill-rule="evenodd" d="M326.62,474.38L313.62,473.38L282.62,511.38L282.38,512.88L294.88,514.38L294.88,513.38Z"/>
<path fill="#ff9422" stroke="#ff9422" stroke-width="1.6" stroke-linejoin="round" fill-rule="evenodd" d="M340.62,472.88L326.88,474.38L295.12,513.38L295.12,514.38L308.12,514.88L307.38,513.62Z"/>
<path fill="#ff9723" stroke="#ff9723" stroke-width="1.6" stroke-linejoin="round" fill-rule="evenodd" d="M354.62,469.12L340.88,472.88L307.62,513.62L308.12,514.62L309.62,514.88L309.88,514.62L319.38,513.88L319.12,512.62Z"/>
<path fill="#ff9823" stroke="#ff9823" stroke-width="1.6" stroke-linejoin="round" fill-rule="evenodd" d="M368.62,463.12L356.38,468.38L354.12,469.88L319.38,512.62L319.62,513.88L330.38,511.62L330.62,509.62Z"/>
<path fill="#ff9823" stroke="#ff9823" stroke-width="1.6" stroke-linejoin="round" fill-rule="evenodd" d="M377.38,458.62L375.62,458.88L369.38,462.62L367.88,464.12L330.88,509.62L330.62,511.62L341.38,507.38L340.88,506.38L341.12,505.38L373.62,465.38L374.62,464.38L375.88,464.88L376.12,464.62Z"/>
<path fill="#ff9522" stroke="#ff9522" stroke-width="1.6" stroke-linejoin="round" fill-rule="evenodd" d="M375.62,464.88L374.62,464.62L342.38,504.12L341.12,505.88L341.62,507.38L350.88,501.88L349.88,500.88L350.88,499.38L371.12,474.62L372.38,475.12L375.12,468.62L375.88,465.62Z"/>
<path fill="#ff9021" stroke="#ff9021" stroke-width="1.6" stroke-linejoin="round" fill-rule="evenodd" d="M371.12,474.88L351.12,499.38L350.12,500.62L350.88,501.62L351.88,501.12L359.62,494.38L358.62,493.12L359.12,492.62L360.38,493.12L360.88,492.88L359.88,491.62L360.62,490.88L361.38,491.12L360.88,490.38L365.62,484.62L366.88,485.12L367.38,484.88L371.62,477.38L372.38,475.38Z"/>
<path fill="#fa8a20" stroke="#fa8a20" stroke-width="1.6" stroke-linejoin="round" fill-rule="evenodd" d="M359.12,492.88L358.88,493.38L359.88,494.12L360.38,493.38ZM367.12,485.38L366.12,484.88L365.38,485.12L361.12,490.38L361.38,490.88L360.12,491.62L360.88,492.62L364.62,488.88Z"/>
<path fill="#fb8a20" stroke="#fb8a20" stroke-width="1.6" stroke-linejoin="round" fill-rule="evenodd" d="M207.38,364.88L208.88,370.12L210.88,375.12L248.62,385.12L252.38,386.38L253.12,386.38L259.62,378.88Z"/>
<path fill="#ff8f21" stroke="#ff8f21" stroke-width="1.6" stroke-linejoin="round" fill-rule="evenodd" d="M206.12,353.62L206.38,358.88L206.88,360.62L207.38,364.62L249.88,375.88L253.62,377.12L259.88,378.62L267.88,370.12Z"/>
<path fill="#ff9221" stroke="#ff9221" stroke-width="1.6" stroke-linejoin="round" fill-rule="evenodd" d="M207.12,341.88L206.88,345.38L206.38,347.38L206.12,353.38L207.38,353.88L210.12,354.38L211.12,354.88L213.88,355.38L214.88,355.88L217.62,356.38L218.62,356.88L221.38,357.38L222.38,357.88L225.12,358.38L228.88,359.62L231.62,360.12L267.38,369.88L268.12,369.88L277.38,360.88L277.38,360.62L271.88,359.38L270.88,358.88L268.12,358.38L264.38,357.12L261.62,356.62L260.62,356.12L257.88,355.62L256.88,355.12L254.12,354.62L253.12,354.12L250.38,353.62L249.38,353.12L246.62,352.62L242.88,351.38L240.12,350.88Z"/>
<path fill="#ff9322" stroke="#ff9322" stroke-width="1.6" stroke-linejoin="round" fill-rule="evenodd" d="M207.12,341.62L277.62,360.62L288.38,350.62L212.88,330.62L212.12,329.12L209.62,330.12L210.12,331.62Z"/>
<path fill="#ff9221" stroke="#ff9221" stroke-width="1.6" stroke-linejoin="round" fill-rule="evenodd" d="M212.38,328.88L212.88,330.38L287.62,350.38L288.62,350.38L300.12,340.12L238.62,323.88L238.38,322.62L231.38,323.12L229.12,323.88L222.62,325.12Z"/>
<path fill="#ff8f21" stroke="#ff8f21" stroke-width="1.6" stroke-linejoin="round" fill-rule="evenodd" d="M238.62,322.62L238.62,323.62L294.62,338.38L299.38,339.88L300.38,339.88L303.12,337.62L303.62,336.38L295.62,332.38L284.38,328.12L270.88,324.38L258.88,322.38L242.62,322.12Z"/>
<path fill="#bc6818" stroke="#bc6818" stroke-width="1.6" stroke-linejoin="round" fill-rule="evenodd" d="M235.62,401.62L242.62,405.38L242.38,403.38Z"/>
<path fill="#d0731a" stroke="#d0731a" stroke-width="1.6" stroke-linejoin="round" fill-rule="evenodd" d="M225.12,393.88L229.62,397.62L234.38,400.88L236.12,401.62L238.88,402.12L242.62,403.38L244.38,399.38L243.12,398.62Z"/>
<path fill="#e17c1d" stroke="#e17c1d" stroke-width="1.6" stroke-linejoin="round" fill-rule="evenodd" d="M217.12,385.12L219.38,388.12L224.88,393.62L244.38,398.88L247.88,393.38Z"/>
<path fill="#f0841e" stroke="#f0841e" stroke-width="1.6" stroke-linejoin="round" fill-rule="evenodd" d="M211.12,375.38L213.38,379.88L216.38,384.38L217.38,385.12L221.88,386.12L247.38,393.12L248.12,393.12L252.88,386.62Z"/>
<path fill="#f8f8f8" stroke="#f8f8f8" stroke-width="1.6" stroke-linejoin="round" fill-rule="evenodd" d="M377.62,458.38L378.12,448.62L378.38,448.38L378.38,442.88L378.12,442.62L377.62,432.38L375.12,420.62L371.38,409.88L370.38,410.62L362.38,410.38L362.12,410.12L355.12,410.12L354.88,409.88L340.12,410.38L339.88,410.62L326.62,411.88L310.38,415.12L300.38,417.88L288.12,422.38L277.62,427.38L267.62,433.62L262.88,437.38L268.12,445.38L278.62,456.38L288.88,463.88L300.62,469.62L313.62,473.12L327.38,474.12L327.62,473.88L341.38,472.62L355.12,468.88L368.38,463.12L376.12,458.38Z"/>
<path fill="#6d3c0e" fill-rule="evenodd" d="M369.12,404.62L368.12,405.38L368.12,410.12L370.38,410.38L371.38,409.38Z"/>
<path fill="#5c330c" fill-rule="evenodd" d="M354.88,380.38L354.12,381.38L354.12,409.62L367.88,410.12L367.88,405.38L369.12,404.12L365.38,396.12L359.12,385.88Z"/>
<path fill="#4a2909" fill-rule="evenodd" d="M341.12,363.62L340.12,364.88L340.12,410.12L346.38,410.12L346.62,409.88L353.88,409.62L353.88,381.38L354.88,380.12L351.12,374.88Z"/>
<path fill="#381f07" fill-rule="evenodd" d="M327.12,351.38L326.38,352.88L326.38,411.88L326.62,411.62L339.88,410.38L339.88,364.88L340.88,363.62L333.12,356.12Z"/>
<path fill="#3c2108" fill-rule="evenodd" d="M314.12,342.38L313.62,342.62L313.12,343.62L313.12,414.38L317.12,413.38L326.12,411.88L326.12,352.88L326.88,351.12L319.88,345.88Z"/>
<path fill="#4e2b0a" fill-rule="evenodd" d="M304.12,336.62L303.62,336.88L303.12,337.88L300.38,340.12L300.38,417.62L312.88,414.38L312.88,343.62L313.62,342.12L308.12,338.62Z"/>
<path fill="#60350c" fill-rule="evenodd" d="M300.12,340.38L288.62,350.62L288.62,422.12L300.12,417.88Z"/>
<path fill="#713e0e" fill-rule="evenodd" d="M288.38,350.88L277.62,360.88L277.62,427.12L288.38,422.12Z"/>
<path fill="#814710" fill-rule="evenodd" d="M277.38,361.12L268.12,370.12L268.12,433.12L277.38,427.38Z"/>
<path fill="#8f4f12" fill-rule="evenodd" d="M267.88,370.38L259.88,378.88L259.88,433.12L262.62,437.38L267.88,433.38Z"/>
<path fill="#9d5614" fill-rule="evenodd" d="M259.62,379.12L253.12,386.62L253.12,419.12L259.62,432.62Z"/>
<path fill="#a85d15" fill-rule="evenodd" d="M252.88,387.12L248.12,393.38L248.12,407.88L249.38,408.38L249.88,409.12L252.88,418.38Z"/>
<path fill="#b26216" fill-rule="evenodd" d="M247.88,393.62L244.62,398.88L244.62,406.38L247.88,407.88Z"/>
<path fill="#b96617" fill-rule="evenodd" d="M244.38,399.62L242.88,403.38L242.88,405.62L244.38,406.12Z"/>
<path fill="#ec821e" fill-rule="evenodd" d="M197.12,338.38L192.38,342.38L186.12,349.88L181.12,358.12L181.38,358.62L181.88,358.88L182.62,358.62L197.88,339.88Z"/>
<path fill="#da781c" fill-rule="evenodd" d="M206.88,331.88L201.38,334.88L197.38,338.12L198.12,339.88L182.88,358.62L182.38,359.12L180.88,358.62L176.88,368.12L177.12,369.12L178.12,369.12L206.88,333.88L207.38,333.12Z"/>
<path fill="#c56d19" fill-rule="evenodd" d="M209.38,330.38L207.12,331.62L207.62,332.62L207.12,333.88L178.12,369.38L176.62,369.12L174.62,378.62L174.88,379.38L175.88,379.62L206.62,341.88L207.38,340.38L208.38,335.88L209.88,331.62Z"/>
<path fill="#af6016" fill-rule="evenodd" d="M207.12,341.38L175.88,379.88L174.62,379.38L173.88,391.12L174.88,391.12L205.88,353.12L206.12,347.38Z"/>
<path fill="#965313" fill-rule="evenodd" d="M205.88,353.38L174.88,391.38L173.88,391.38L174.62,402.88L175.62,402.88L207.12,364.12L206.12,358.88Z"/>
<path fill="#7c4410" fill-rule="evenodd" d="M207.12,364.38L175.62,403.12L174.62,403.12L174.62,404.62L176.38,412.62L176.62,415.12L178.12,414.62L210.12,375.38L210.38,374.12L208.62,370.12Z"/>
<path fill="#60350c" fill-rule="evenodd" d="M210.62,374.88L178.12,414.88L176.88,415.38L176.88,416.12L180.88,427.62L181.88,427.12L184.38,423.62L215.88,385.12L216.12,384.12L213.12,379.88Z"/>
<path fill="#442509" fill-rule="evenodd" d="M216.38,384.62L184.62,423.62L182.12,427.12L180.88,427.88L186.12,439.12L187.88,438.12L224.12,393.38L219.12,388.12Z"/>
<path fill="#3b2007" fill-rule="evenodd" d="M224.38,393.38L187.38,438.88L186.12,439.38L192.88,450.88L194.12,450.38L234.12,401.12L233.62,400.38L228.62,397.12Z"/>
<path fill="#57300b" fill-rule="evenodd" d="M239.38,404.12L234.38,401.12L194.38,450.38L192.88,451.12L201.12,462.38L246.12,407.38Z"/>
<path fill="#733f0f" fill-rule="evenodd" d="M249.38,408.62L246.38,407.38L245.12,408.62L205.12,458.12L201.38,462.38L202.62,464.12L210.38,472.38L212.38,470.62L253.38,420.12Z"/>
<path fill="#8e4e12" fill-rule="evenodd" d="M253.38,420.38L214.88,467.88L210.62,472.62L220.88,482.12L221.88,481.38L221.88,480.88L259.88,434.38L260.12,433.88Z"/>
<path fill="#a75c15" fill-rule="evenodd" d="M260.12,434.12L221.12,482.38L232.12,491.12L233.62,488.62L268.38,446.12Z"/>
<path fill="#be6918" fill-rule="evenodd" d="M268.62,446.12L233.12,489.62L232.62,491.38L243.88,498.12L277.88,456.38L277.88,455.88Z"/>
<path fill="#d4751b" fill-rule="evenodd" d="M288.88,464.12L278.12,456.12L244.38,497.62L244.12,498.38L256.38,504.38L259.62,499.88Z"/>
<path fill="#e67f1d" fill-rule="evenodd" d="M300.62,469.88L289.12,464.12L257.88,502.38L256.62,504.62L268.88,509.12Z"/>
<path fill="#f6881f" fill-rule="evenodd" d="M313.38,473.12L300.88,469.88L271.12,506.38L269.12,509.38L273.62,510.38L279.12,512.12L282.12,512.62L282.38,511.38Z"/>
<path fill="#ff8f21" fill-rule="evenodd" d="M326.62,474.38L313.62,473.38L282.62,511.38L282.38,512.88L294.88,514.38L294.88,513.38Z"/>
<path fill="#ff9422" fill-rule="evenodd" d="M340.62,472.88L326.88,474.38L295.12,513.38L295.12,514.38L308.12,514.88L307.38,513.62Z"/>
<path fill="#ff9723" fill-rule="evenodd" d="M354.62,469.12L340.88,472.88L307.62,513.62L308.12,514.62L309.62,514.88L309.88,514.62L319.38,513.88L319.12,512.62Z"/>
<path fill="#ff9823" fill-rule="evenodd" d="M368.62,463.12L356.38,468.38L354.12,469.88L319.38,512.62L319.62,513.88L330.38,511.62L330.62,509.62Z"/>
<path fill="#ff9823" fill-rule="evenodd" d="M377.38,458.62L375.62,458.88L369.38,462.62L367.88,464.12L330.88,509.62L330.62,511.62L341.38,507.38L340.88,506.38L341.12,505.38L373.62,465.38L374.62,464.38L375.88,464.88L376.12,464.62Z"/>
<path fill="#ff9522" fill-rule="evenodd" d="M375.62,464.88L374.62,464.62L342.38,504.12L341.12,505.88L341.62,507.38L350.88,501.88L349.88,500.88L350.88,499.38L371.12,474.62L372.38,475.12L375.12,468.62L375.88,465.62Z"/>
<path fill="#ff9021" fill-rule="evenodd" d="M371.12,474.88L351.12,499.38L350.12,500.62L350.88,501.62L351.88,501.12L359.62,494.38L358.62,493.12L359.12,492.62L360.38,493.12L360.88,492.88L359.88,491.62L360.62,490.88L361.38,491.12L360.88,490.38L365.62,484.62L366.88,485.12L367.38,484.88L371.62,477.38L372.38,475.38Z"/>
<path fill="#fa8a20" fill-rule="evenodd" d="M359.12,492.88L358.88,493.38L359.88,494.12L360.38,493.38ZM367.12,485.38L366.12,484.88L365.38,485.12L361.12,490.38L361.38,490.88L360.12,491.62L360.88,492.62L364.62,488.88Z"/>
<path fill="#fb8a20" fill-rule="evenodd" d="M207.38,364.88L208.88,370.12L210.88,375.12L248.62,385.12L252.38,386.38L253.12,386.38L259.62,378.88Z"/>
<path fill="#ff8f21" fill-rule="evenodd" d="M206.12,353.62L206.38,358.88L206.88,360.62L207.38,364.62L249.88,375.88L253.62,377.12L259.88,378.62L267.88,370.12Z"/>
<path fill="#ff9221" fill-rule="evenodd" d="M207.12,341.88L206.88,345.38L206.38,347.38L206.12,353.38L207.38,353.88L210.12,354.38L211.12,354.88L213.88,355.38L214.88,355.88L217.62,356.38L218.62,356.88L221.38,357.38L222.38,357.88L225.12,358.38L228.88,359.62L231.62,360.12L267.38,369.88L268.12,369.88L277.38,360.88L277.38,360.62L271.88,359.38L270.88,358.88L268.12,358.38L264.38,357.12L261.62,356.62L260.62,356.12L257.88,355.62L256.88,355.12L254.12,354.62L253.12,354.12L250.38,353.62L249.38,353.12L246.62,352.62L242.88,351.38L240.12,350.88Z"/>
<path fill="#ff9322" fill-rule="evenodd" d="M207.12,341.62L277.62,360.62L288.38,350.62L212.88,330.62L212.12,329.12L209.62,330.12L210.12,331.62Z"/>
<path fill="#ff9221" fill-rule="evenodd" d="M212.38,328.88L212.88,330.38L287.62,350.38L288.62,350.38L300.12,340.12L238.62,323.88L238.38,322.62L231.38,323.12L229.12,323.88L222.62,325.12Z"/>
<path fill="#ff8f21" fill-rule="evenodd" d="M238.62,322.62L238.62,323.62L294.62,338.38L299.38,339.88L300.38,339.88L303.12,337.62L303.62,336.38L295.62,332.38L284.38,328.12L270.88,324.38L258.88,322.38L242.62,322.12Z"/>
<path fill="#bc6818" fill-rule="evenodd" d="M235.62,401.62L242.62,405.38L242.38,403.38Z"/>
<path fill="#d0731a" fill-rule="evenodd" d="M225.12,393.88L229.62,397.62L234.38,400.88L236.12,401.62L238.88,402.12L242.62,403.38L244.38,399.38L243.12,398.62Z"/>
<path fill="#e17c1d" fill-rule="evenodd" d="M217.12,385.12L219.38,388.12L224.88,393.62L244.38,398.88L247.88,393.38Z"/>
<path fill="#f0841e" fill-rule="evenodd" d="M211.12,375.38L213.38,379.88L216.38,384.38L217.38,385.12L221.88,386.12L247.38,393.12L248.12,393.12L252.88,386.62Z"/>
<path fill="#f8f8f8" fill-rule="evenodd" d="M377.62,458.38L378.12,448.62L378.38,448.38L378.38,442.88L378.12,442.62L377.62,432.38L375.12,420.62L371.38,409.88L370.38,410.62L362.38,410.38L362.12,410.12L355.12,410.12L354.88,409.88L340.12,410.38L339.88,410.62L326.62,411.88L310.38,415.12L300.38,417.88L288.12,422.38L277.62,427.38L267.62,433.62L262.88,437.38L268.12,445.38L278.62,456.38L288.88,463.88L300.62,469.62L313.62,473.12L327.38,474.12L327.62,473.88L341.38,472.62L355.12,468.88L368.38,463.12L376.12,458.38Z"/>
<polygon fill="#dd7a1c" stroke="#dd7a1c" stroke-width="2" points="522.4,458.6 528.3,450.6 534.1,441.3 539.7,430.8 545.1,419.3 550.1,407 554.7,394 558.7,380.6 562.2,367 565.1,353.5 567.3,340.1 568.7,327.1 569.5,314.8 569.5,303.3 568.7,292.8 567.3,283.5 565.1,275.5 562.2,268.9 558.7,263.9 554.7,260.5 550.1,258.8 545.1,258.8 539.7,260.5 534.1,263.9 528.3,268.9 522.4,275.5 516.4,283.5 510.6,292.8 505,303.3 499.6,314.8 494.6,327.1 490,340.1 486,353.5 482.5,367 479.6,380.6 477.4,394 476,407 475.2,419.3 475.2,430.8 476,441.3 477.4,450.6 479.6,458.6 482.5,465.1 486,470.2 490,473.5 494.6,475.2 499.6,475.2 505,473.5 510.6,470.2 516.4,465.1"/>
<path fill="#fb8a20" stroke="#fb8a20" stroke-width="1.6" stroke-linejoin="round" fill-rule="evenodd" d="M474.62,437.38L474.88,443.12L475.62,446.38L477.62,446.38L481.38,447.62L522.12,458.38L523.38,459.62L529.38,451.62L527.38,450.38L486.38,439.62L475.88,436.62Z"/>
<path fill="#ff8f21" stroke="#ff8f21" stroke-width="1.6" stroke-linejoin="round" fill-rule="evenodd" d="M474.12,425.62L474.38,437.12L475.88,436.38L486.38,439.38L528.12,450.38L529.12,451.38L529.62,451.38L535.38,442.12L532.62,440.88L479.38,426.88L475.62,425.62Z"/>
<path fill="#ff9221" stroke="#ff9221" stroke-width="1.6" stroke-linejoin="round" fill-rule="evenodd" d="M474.38,413.62L474.12,425.38L475.62,425.38L479.38,426.62L532.62,440.62L535.12,441.88L535.62,441.62L540.88,431.38L540.12,430.88L518.62,425.38L475.62,413.62Z"/>
<path fill="#ff9322" stroke="#ff9322" stroke-width="1.6" stroke-linejoin="round" fill-rule="evenodd" d="M475.38,400.62L474.38,413.38L475.62,413.38L518.62,425.12L540.12,430.62L540.88,431.12L546.12,420.62L545.88,419.88L542.62,418.62L479.12,401.88Z"/>
<path fill="#ff9221" stroke="#ff9221" stroke-width="1.6" stroke-linejoin="round" fill-rule="evenodd" d="M477.12,387.88L475.62,398.62L475.62,400.38L476.38,400.88L544.38,418.88L546.12,419.88L546.62,419.38L551.12,408.12L550.88,407.62L549.62,406.88L484.38,389.62L480.62,388.38L477.38,387.62Z"/>
<path fill="#ff8f21" stroke="#ff8f21" stroke-width="1.6" stroke-linejoin="round" fill-rule="evenodd" d="M479.62,374.12L477.38,386.38L477.62,387.62L480.62,388.12L484.38,389.38L549.62,406.62L551.12,407.62L555.88,394.62L555.62,394.12L552.38,393.62L551.38,393.12L548.62,392.62L547.62,392.12L544.88,391.62L543.88,391.12L541.12,390.62L540.12,390.12Z"/>
<path fill="#fa8a20" stroke="#fa8a20" stroke-width="1.6" stroke-linejoin="round" fill-rule="evenodd" d="M482.88,360.12L479.88,372.88L480.12,374.12L483.12,374.62L484.12,375.12L486.88,375.62L490.62,376.88L508.38,381.38L552.38,393.38L555.88,394.12L559.88,381.12L559.12,380.62L556.88,380.38L520.38,370.38L502.62,365.88L498.88,364.62L484.88,361.12Z"/>
<path fill="#ef831e" stroke="#ef831e" stroke-width="1.6" stroke-linejoin="round" fill-rule="evenodd" d="M486.62,346.62L484.62,352.88L482.88,359.88L484.88,360.88L498.88,364.38L502.62,365.62L520.38,370.12L556.88,380.12L559.12,380.38L559.88,380.88L563.38,367.12L561.62,367.12L560.62,366.62L550.38,364.12L546.62,362.88L489.62,347.88Z"/>
<path fill="#e07b1c" stroke="#e07b1c" stroke-width="1.6" stroke-linejoin="round" fill-rule="evenodd" d="M486.88,345.88L486.88,346.38L488.12,347.12L535.38,359.62L536.38,360.12L539.12,360.62L540.12,361.12L542.88,361.62L543.88,362.12L546.62,362.62L554.12,364.88L556.88,365.38L557.88,365.88L560.62,366.38L561.62,366.88L563.38,366.88L563.62,366.38L563.88,364.12L566.12,354.88L566.12,354.12L565.38,353.62L513.38,339.88L505.88,337.62L503.12,337.12L502.12,336.62L499.38,336.12L498.38,335.62L495.62,335.12L494.62,334.62L491.88,334.12L491.12,333.62Z"/>
<path fill="#ce721a" stroke="#ce721a" stroke-width="1.6" stroke-linejoin="round" fill-rule="evenodd" d="M491.12,333.12L491.88,333.88L562.88,352.62L566.12,353.88L566.38,353.62L568.38,340.12L566.62,340.12L560.88,338.38L496.62,321.38L495.88,320.88L493.62,325.88Z"/>
<path fill="#ba6718" stroke="#ba6718" stroke-width="1.6" stroke-linejoin="round" fill-rule="evenodd" d="M495.88,320.38L496.12,320.88L497.38,321.38L560.88,338.12L566.62,339.88L568.62,339.62L569.62,327.12L566.88,326.88L551.88,322.62L502.38,309.62L501.12,308.88L499.88,310.88Z"/>
<path fill="#a45a15" stroke="#a45a15" stroke-width="1.6" stroke-linejoin="round" fill-rule="evenodd" d="M501.12,308.12L501.12,308.62L502.38,309.38L508.88,310.88L512.62,312.12L530.38,316.62L566.88,326.62L569.62,326.88L570.38,314.88L567.88,314.62L552.88,310.38L508.12,298.62L506.62,297.88L506.12,298.12Z"/>
<path fill="#8c4d12" stroke="#8c4d12" stroke-width="1.6" stroke-linejoin="round" fill-rule="evenodd" d="M506.38,297.62L510.88,299.12L552.88,310.12L567.88,314.38L570.38,314.62L570.38,303.38L568.88,303.38L555.62,299.62L552.88,299.12L549.12,297.88L513.62,288.62L512.38,287.88L511.88,288.12Z"/>
<path fill="#733f0f" stroke="#733f0f" stroke-width="1.6" stroke-linejoin="round" fill-rule="evenodd" d="M512.38,287.38L512.62,287.88L513.62,288.38L527.62,291.88L567.88,302.88L570.38,303.12L569.62,292.88L566.12,292.38L558.62,290.12L519.62,279.88L518.62,278.62L517.88,279.12L515.62,282.12Z"/>
<path fill="#58310b" stroke="#58310b" stroke-width="1.6" stroke-linejoin="round" fill-rule="evenodd" d="M518.62,278.12L519.62,279.62L558.62,289.88L566.12,292.12L569.62,292.62L568.62,283.62L565.88,283.38L550.88,279.12L525.88,272.62L524.62,271.38L522.38,273.38Z"/>
<path fill="#3d2208" stroke="#3d2208" stroke-width="1.6" stroke-linejoin="round" fill-rule="evenodd" d="M524.38,271.12L526.62,272.62L550.88,278.88L565.88,283.12L568.38,283.38L568.38,282.38L566.38,275.12L564.62,275.62L553.38,272.38L531.38,266.62L530.12,265.38Z"/>
<path fill="#402308" stroke="#402308" stroke-width="1.6" stroke-linejoin="round" fill-rule="evenodd" d="M530.38,265.38L531.38,266.38L553.38,272.12L564.62,275.38L565.38,275.38L566.12,274.88L563.38,268.62L562.62,269.12L560.12,268.62L545.12,264.38L537.12,262.38L536.12,261.38L533.38,262.62Z"/>
<path fill="#5b320c" stroke="#5b320c" stroke-width="1.6" stroke-linejoin="round" fill-rule="evenodd" d="M536.12,261.12L537.12,262.12L545.12,264.12L562.12,268.88L563.38,268.38L559.88,263.12L558.62,264.12L542.88,259.88L541.88,258.62L539.12,259.38Z"/>
<path fill="#75410f" stroke="#75410f" stroke-width="1.6" stroke-linejoin="round" fill-rule="evenodd" d="M542.12,258.62L542.88,259.62L558.62,263.88L559.62,262.88L555.12,259.38L554.62,260.38L554.12,260.62L553.88,259.88L553.62,260.38L548.62,259.12L548.38,257.88L543.88,257.88Z"/>
<path fill="#8f4f12" stroke="#8f4f12" stroke-width="1.6" stroke-linejoin="round" fill-rule="evenodd" d="M548.62,257.88L548.62,258.88L553.62,260.12L553.88,259.62L554.12,260.38L554.88,259.38L551.38,257.88Z"/>
<path fill="#a65c15" stroke="#a65c15" stroke-width="1.6" stroke-linejoin="round" fill-rule="evenodd" d="M488.12,473.62L488.38,474.12L489.62,474.88L493.38,476.12L499.12,476.12L499.12,475.12L489.12,472.62Z"/>
<path fill="#bc6818" stroke="#bc6818" stroke-width="1.6" stroke-linejoin="round" fill-rule="evenodd" d="M483.12,468.62L484.62,470.88L487.88,473.62L489.12,472.38L499.12,474.88L499.38,476.12L500.88,476.12L505.38,474.88L504.62,473.62L503.38,473.12L500.62,472.62L484.62,468.12Z"/>
<path fill="#d0731a" stroke="#d0731a" stroke-width="1.6" stroke-linejoin="round" fill-rule="evenodd" d="M479.88,462.88L481.62,466.62L482.88,468.38L484.62,467.88L493.12,470.38L503.38,472.88L504.62,473.38L505.62,474.62L510.88,471.62L510.38,470.12L481.38,462.38Z"/>
<path fill="#e17c1d" stroke="#e17c1d" stroke-width="1.6" stroke-linejoin="round" fill-rule="evenodd" d="M477.62,455.88L478.38,459.12L479.88,462.62L481.38,462.12L510.38,469.88L511.12,471.38L517.12,466.38L516.12,465.12L491.12,458.62L478.88,455.12Z"/>
<path fill="#f0841e" stroke="#f0841e" stroke-width="1.6" stroke-linejoin="round" fill-rule="evenodd" d="M475.62,446.62L476.12,450.62L477.38,455.62L478.88,454.88L491.12,458.38L516.12,464.88L517.12,466.12L518.88,464.62L523.12,459.88L522.12,458.62L502.88,453.62L477.62,446.62Z"/>
<path fill="#fb8a20" fill-rule="evenodd" d="M474.62,437.38L474.88,443.12L475.62,446.38L477.62,446.38L481.38,447.62L522.12,458.38L523.38,459.62L529.38,451.62L527.38,450.38L486.38,439.62L475.88,436.62Z"/>
<path fill="#ff8f21" fill-rule="evenodd" d="M474.12,425.62L474.38,437.12L475.88,436.38L486.38,439.38L528.12,450.38L529.12,451.38L529.62,451.38L535.38,442.12L532.62,440.88L479.38,426.88L475.62,425.62Z"/>
<path fill="#ff9221" fill-rule="evenodd" d="M474.38,413.62L474.12,425.38L475.62,425.38L479.38,426.62L532.62,440.62L535.12,441.88L535.62,441.62L540.88,431.38L540.12,430.88L518.62,425.38L475.62,413.62Z"/>
<path fill="#ff9322" fill-rule="evenodd" d="M475.38,400.62L474.38,413.38L475.62,413.38L518.62,425.12L540.12,430.62L540.88,431.12L546.12,420.62L545.88,419.88L542.62,418.62L479.12,401.88Z"/>
<path fill="#ff9221" fill-rule="evenodd" d="M477.12,387.88L475.62,398.62L475.62,400.38L476.38,400.88L544.38,418.88L546.12,419.88L546.62,419.38L551.12,408.12L550.88,407.62L549.62,406.88L484.38,389.62L480.62,388.38L477.38,387.62Z"/>
<path fill="#ff8f21" fill-rule="evenodd" d="M479.62,374.12L477.38,386.38L477.62,387.62L480.62,388.12L484.38,389.38L549.62,406.62L551.12,407.62L555.88,394.62L555.62,394.12L552.38,393.62L551.38,393.12L548.62,392.62L547.62,392.12L544.88,391.62L543.88,391.12L541.12,390.62L540.12,390.12Z"/>
<path fill="#fa8a20" fill-rule="evenodd" d="M482.88,360.12L479.88,372.88L480.12,374.12L483.12,374.62L484.12,375.12L486.88,375.62L490.62,376.88L508.38,381.38L552.38,393.38L555.88,394.12L559.88,381.12L559.12,380.62L556.88,380.38L520.38,370.38L502.62,365.88L498.88,364.62L484.88,361.12Z"/>
<path fill="#ef831e" fill-rule="evenodd" d="M486.62,346.62L484.62,352.88L482.88,359.88L484.88,360.88L498.88,364.38L502.62,365.62L520.38,370.12L556.88,380.12L559.12,380.38L559.88,380.88L563.38,367.12L561.62,367.12L560.62,366.62L550.38,364.12L546.62,362.88L489.62,347.88Z"/>
<path fill="#e07b1c" fill-rule="evenodd" d="M486.88,345.88L486.88,346.38L488.12,347.12L535.38,359.62L536.38,360.12L539.12,360.62L540.12,361.12L542.88,361.62L543.88,362.12L546.62,362.62L554.12,364.88L556.88,365.38L557.88,365.88L560.62,366.38L561.62,366.88L563.38,366.88L563.62,366.38L563.88,364.12L566.12,354.88L566.12,354.12L565.38,353.62L513.38,339.88L505.88,337.62L503.12,337.12L502.12,336.62L499.38,336.12L498.38,335.62L495.62,335.12L494.62,334.62L491.88,334.12L491.12,333.62Z"/>
<path fill="#ce721a" fill-rule="evenodd" d="M491.12,333.12L491.88,333.88L562.88,352.62L566.12,353.88L566.38,353.62L568.38,340.12L566.62,340.12L560.88,338.38L496.62,321.38L495.88,320.88L493.62,325.88Z"/>
<path fill="#ba6718" fill-rule="evenodd" d="M495.88,320.38L496.12,320.88L497.38,321.38L560.88,338.12L566.62,339.88L568.62,339.62L569.62,327.12L566.88,326.88L551.88,322.62L502.38,309.62L501.12,308.88L499.88,310.88Z"/>
<path fill="#a45a15" fill-rule="evenodd" d="M501.12,308.12L501.12,308.62L502.38,309.38L508.88,310.88L512.62,312.12L530.38,316.62L566.88,326.62L569.62,326.88L570.38,314.88L567.88,314.62L552.88,310.38L508.12,298.62L506.62,297.88L506.12,298.12Z"/>
<path fill="#8c4d12" fill-rule="evenodd" d="M506.38,297.62L510.88,299.12L552.88,310.12L567.88,314.38L570.38,314.62L570.38,303.38L568.88,303.38L555.62,299.62L552.88,299.12L549.12,297.88L513.62,288.62L512.38,287.88L511.88,288.12Z"/>
<path fill="#733f0f" fill-rule="evenodd" d="M512.38,287.38L512.62,287.88L513.62,288.38L527.62,291.88L567.88,302.88L570.38,303.12L569.62,292.88L566.12,292.38L558.62,290.12L519.62,279.88L518.62,278.62L517.88,279.12L515.62,282.12Z"/>
<path fill="#58310b" fill-rule="evenodd" d="M518.62,278.12L519.62,279.62L558.62,289.88L566.12,292.12L569.62,292.62L568.62,283.62L565.88,283.38L550.88,279.12L525.88,272.62L524.62,271.38L522.38,273.38Z"/>
<path fill="#3d2208" fill-rule="evenodd" d="M524.38,271.12L526.62,272.62L550.88,278.88L565.88,283.12L568.38,283.38L568.38,282.38L566.38,275.12L564.62,275.62L553.38,272.38L531.38,266.62L530.12,265.38Z"/>
<path fill="#402308" fill-rule="evenodd" d="M530.38,265.38L531.38,266.38L553.38,272.12L564.62,275.38L565.38,275.38L566.12,274.88L563.38,268.62L562.62,269.12L560.12,268.62L545.12,264.38L537.12,262.38L536.12,261.38L533.38,262.62Z"/>
<path fill="#5b320c" fill-rule="evenodd" d="M536.12,261.12L537.12,262.12L545.12,264.12L562.12,268.88L563.38,268.38L559.88,263.12L558.62,264.12L542.88,259.88L541.88,258.62L539.12,259.38Z"/>
<path fill="#75410f" fill-rule="evenodd" d="M542.12,258.62L542.88,259.62L558.62,263.88L559.62,262.88L555.12,259.38L554.62,260.38L554.12,260.62L553.88,259.88L553.62,260.38L548.62,259.12L548.38,257.88L543.88,257.88Z"/>
<path fill="#8f4f12" fill-rule="evenodd" d="M548.62,257.88L548.62,258.88L553.62,260.12L553.88,259.62L554.12,260.38L554.88,259.38L551.38,257.88Z"/>
<path fill="#a65c15" fill-rule="evenodd" d="M488.12,473.62L488.38,474.12L489.62,474.88L493.38,476.12L499.12,476.12L499.12,475.12L489.12,472.62Z"/>
<path fill="#bc6818" fill-rule="evenodd" d="M483.12,468.62L484.62,470.88L487.88,473.62L489.12,472.38L499.12,474.88L499.38,476.12L500.88,476.12L505.38,474.88L504.62,473.62L503.38,473.12L500.62,472.62L484.62,468.12Z"/>
<path fill="#d0731a" fill-rule="evenodd" d="M479.88,462.88L481.62,466.62L482.88,468.38L484.62,467.88L493.12,470.38L503.38,472.88L504.62,473.38L505.62,474.62L510.88,471.62L510.38,470.12L481.38,462.38Z"/>
<path fill="#e17c1d" fill-rule="evenodd" d="M477.62,455.88L478.38,459.12L479.88,462.62L481.38,462.12L510.38,469.88L511.12,471.38L517.12,466.38L516.12,465.12L491.12,458.62L478.88,455.12Z"/>
<path fill="#f0841e" fill-rule="evenodd" d="M475.62,446.62L476.12,450.62L477.38,455.62L478.88,454.88L491.12,458.38L516.12,464.88L517.12,466.12L518.88,464.62L523.12,459.88L522.12,458.62L502.88,453.62L477.62,446.62Z"/>
</g>
<g id="cube">
<path fill="#345888" fill-rule="evenodd" d="M133.6,462.3L132.8,449.1L132.8,246.9L133.6,260.1ZM536.5,147.6L514.5,140.1L514.3,138L536.1,141.5Z"/>
<path fill="#4271ae" fill-rule="evenodd" d="M140.7,241.1L133.6,260.1L132.8,246.9L140,229.2ZM414.9,280.4L404.3,280.6L407,262.1L410.7,262Z"/>
<path fill="#4576b6" fill-rule="evenodd" d="M252.6,89.5L158.1,205.7L145.7,217.8L240.2,101.6Z"/>
<path fill="#487bbd" fill-rule="evenodd" d="M158.1,205.7L153.6,214.7L140,229.2L145.7,217.8ZM275.6,77.8L269.7,82.8L252.6,89.5L261.8,81.6ZM291.8,80.6L289.8,82.3L269.7,82.8L275.6,77.8Z"/>
<path fill="#4b81c7" fill-rule="evenodd" d="M154.2,224.2L140.7,241.1L140,229.2L153.6,214.7Z"/>
<path fill="#34598a" fill-rule="evenodd" d="M141.5,474.7L133.6,462.3L133.6,260.1L141.5,272.5Z"/>
<path fill="#223a5a" fill-rule="evenodd" d="M147.8,490.8L140.7,479.6L133.6,462.3L141.5,474.7Z"/>
<path fill="#4372af" fill-rule="evenodd" d="M147.8,252.3L141.5,272.5L133.6,260.1L140.7,241.1Z"/>
<path fill="#4a7fc3" fill-rule="evenodd" d="M269.7,82.8L175.2,199L158.1,205.7L252.6,89.5Z"/>
<path fill="#4c82c9" fill-rule="evenodd" d="M175.2,199L172.3,204.8L153.6,214.7L158.1,205.7Z"/>
<path fill="#4c82c8" fill-rule="evenodd" d="M159.8,233.1L147.8,252.3L140.7,241.1L154.2,224.2ZM195.7,204.5L176.3,216.6L172.7,210.9L194.4,202.6Z"/>
<path fill="#4f87d0" fill-rule="evenodd" d="M172.7,210.9L154.2,224.2L153.6,214.7L172.3,204.8ZM176.3,216.6L159.8,233.1L154.2,224.2L172.7,210.9Z"/>
<path fill="#4170ad" fill-rule="evenodd" d="M283.9,74.1L275.6,77.8L261.8,81.6L274.8,75.8Z"/>
<path fill="#315481" fill-rule="evenodd" d="M155.7,485.1L141.5,474.7L141.5,272.5L155.7,282.9Z"/>
<path fill="#1f3552" fill-rule="evenodd" d="M160.6,500.2L147.8,490.8L141.5,474.7L155.7,485.1ZM457,314L440.6,321.4L434,299L447,293.2Z"/>
<path fill="#3f6da7" fill-rule="evenodd" d="M160.6,261.7L155.7,282.9L141.5,272.5L147.8,252.3Z"/>
<path fill="#3a649a" fill-rule="evenodd" d="M293.9,72L283.9,74.1L274.8,75.8L290.3,72.6Z"/>
<path fill="#0f1a28" fill-rule="evenodd" d="M170,509.9L159.8,502.5L147.8,490.8L160.6,500.2Z"/>
<path fill="#497dc1" fill-rule="evenodd" d="M170,240.5L160.6,261.7L147.8,252.3L159.8,233.1ZM289.8,82.3L195.3,198.5L175.2,199L269.7,82.8ZM191.6,224.8L183.6,245.8L170,240.5L182.8,221.4Z"/>
<path fill="#4a7fc4" fill-rule="evenodd" d="M195.3,198.5L194.3,200.5L172.3,204.8L175.2,199Z"/>
<path fill="#4c81c7" fill-rule="evenodd" d="M194.4,202.6L172.7,210.9L172.3,204.8L194.3,200.5Z"/>
<path fill="#4576b5" fill-rule="evenodd" d="M294.7,79.3L291.8,80.6L275.6,77.8L283.9,74.1Z"/>
<path fill="#4d84cb" fill-rule="evenodd" d="M182.8,221.4L170,240.5L159.8,233.1L176.3,216.6Z"/>
<path fill="#416fab" fill-rule="evenodd" d="M298.1,78.6L294.7,79.3L283.9,74.1L293.9,72Z"/>
<path fill="#2a486f" fill-rule="evenodd" d="M174.8,492.5L155.7,485.1L155.7,282.9L174.8,290.3Z"/>
<path fill="#192a41" fill-rule="evenodd" d="M177.8,506.9L160.6,500.2L155.7,485.1L174.8,492.5ZM386.2,569.4L183.6,515.2L177.8,506.9L380.4,561.1Z"/>
<path fill="#396297" fill-rule="evenodd" d="M177.8,268.4L174.8,290.3L155.7,282.9L160.6,261.7ZM457,552.5L447,562.6L434,568.4L440.6,559.8Z"/>
<path fill="#4b80c5" fill-rule="evenodd" d="M197.9,206.2L182.8,221.4L176.3,216.6L195.7,204.5Z"/>
<path fill="#3d69a1" fill-rule="evenodd" d="M304.5,71.8L301.8,78.5L298.1,78.6L293.9,72Z"/>
<path fill="#152336" fill-rule="evenodd" d="M183.6,515.2L170,509.9L160.6,500.2L177.8,506.9Z"/>
<path fill="#4474b3" fill-rule="evenodd" d="M183.6,245.8L177.8,268.4L160.6,261.7L170,240.5Z"/>
<path fill="#497cc0" fill-rule="evenodd" d="M201,207.4L191.6,224.8L182.8,221.4L197.9,206.2Z"/>
<path fill="#3a6298" fill-rule="evenodd" d="M314.6,73.4L305.3,79.1L301.8,78.5L304.5,71.8Z"/>
<path fill="#264164" fill-rule="evenodd" d="M377.3,546.6L174.8,492.5L174.8,290.3L377.3,344.5ZM377.3,445.6L376.5,433.9L374.2,421.9L370.2,410L364.8,398.1L358,386.6L349.9,375.5L340.6,365.2L330.3,355.7L319.2,347.2L307.4,339.8L295,333.6L282.4,328.8L269.7,325.4L257.1,323.5L244.8,323L232.9,324.1L221.8,326.7L211.5,330.7L202.2,336.1L194.1,342.7L187.3,350.6L181.9,359.6L178,369.5L175.6,380.1L174.8,391.4L175.6,403.1L178,415L181.9,427L187.3,438.8L194.1,450.4L202.2,461.4L211.5,471.7L221.8,481.2L232.9,489.8L244.8,497.2L257.1,503.3L269.7,508.1L282.4,511.5L295,513.5L307.4,513.9L319.2,512.8L330.3,510.3L340.6,506.3L349.9,500.9L358,494.2L364.8,486.3L370.2,477.3L374.2,467.5L376.5,456.8Z"/>
<path fill="#142335" fill-rule="evenodd" d="M380.4,561.1L177.8,506.9L174.8,492.5L377.3,546.6Z"/>
<path fill="#355b8c" fill-rule="evenodd" d="M380.4,322.6L377.3,344.5L174.8,290.3L177.8,268.4ZM536.5,147.6L533.5,153.4L513.5,142.1L514.5,140.1Z"/>
<path fill="#406ea9" fill-rule="evenodd" d="M386.2,300L380.4,322.6L177.8,268.4L183.6,245.8Z"/>
<path fill="#4779ba" fill-rule="evenodd" d="M394.1,279L386.2,300L183.6,245.8L191.6,224.8Z"/>
<path fill="#477abc" fill-rule="evenodd" d="M403.5,261.5L394.1,279L191.6,224.8L201,207.4Z"/>
<path fill="#4271af" fill-rule="evenodd" d="M514.5,140.1L513.5,142.1L419,258.3L417,260L414.1,261.3L410.7,262L407,262.1L403.5,261.5L201,207.4L197.9,206.2L195.7,204.5L194.4,202.6L194.3,200.5L195.3,198.5L289.8,82.3L291.8,80.6L294.7,79.3L298.1,78.6L301.8,78.5L305.3,79.1L507.8,133.2L510.8,134.4L513.1,136.1L514.3,138ZM455.7,197.4L460.8,189.9L464.2,182.1L465.9,174.1L465.9,166.1L464.1,158.1L460.5,150.3L455.3,142.8L448.5,135.8L440.2,129.3L430.6,123.4L419.8,118.3L407.9,114L395.2,110.6L381.8,108.2L368,106.7L354,106.2L340,106.7L326.2,108.3L312.9,110.8L300.2,114.2L288.4,118.6L277.6,123.7L268,129.6L259.8,136.1L253.1,143.2L248,150.7L244.5,158.5L242.8,166.5L242.9,174.6L244.7,182.5L248.2,190.3L253.4,197.8L260.2,204.8L268.5,211.3L278.2,217.2L289,222.3L300.9,226.6L313.6,230L327,232.4L340.8,233.9L354.8,234.4L368.8,233.9L382.6,232.3L395.9,229.8L408.6,226.4L420.4,222L431.2,216.9L440.7,211L449,204.5Z"/>
<path fill="#386094" fill-rule="evenodd" d="M517.2,127.6L507.8,133.2L305.3,79.1L314.6,73.4Z"/>
<path fill="#2a476e" fill-rule="evenodd" d="M525.2,129L517.2,127.6L314.6,73.4L322.6,74.9Z"/>
<path fill="#4677b8" fill-rule="evenodd" d="M407,262.1L404.3,280.6L394.1,279L403.5,261.5Z"/>
<path fill="#375d90" fill-rule="evenodd" d="M526,131L510.8,134.4L507.8,133.2L517.2,127.6ZM475.1,526.2L468.6,542.6L457,552.5L462.3,537.2Z"/>
<path fill="#2c4c75" fill-rule="evenodd" d="M404.3,572.5L394.1,570.8L386.2,569.4L402,572Z"/>
<path fill="#4474b2" fill-rule="evenodd" d="M404.3,280.6L402,302.6L386.2,300L394.1,279Z"/>
<path fill="#274266" fill-rule="evenodd" d="M538.8,134.3L526,131L517.2,127.6L525.2,129Z"/>
<path fill="#1c304b" fill-rule="evenodd" d="M402,572L386.2,569.4L380.4,561.1L400.4,564.3Z"/>
<path fill="#3c679e" fill-rule="evenodd" d="M402,302.6L400.4,325.8L380.4,322.6L386.2,300Z"/>
<path fill="#345a8a" fill-rule="evenodd" d="M532.5,135.8L513.1,136.1L510.8,134.4L526,131Z"/>
<path fill="#101b29" fill-rule="evenodd" d="M400.4,564.3L380.4,561.1L377.3,546.6L399.5,550.3Z"/>
<path fill="#30527e" fill-rule="evenodd" d="M400.4,325.8L399.5,348.1L377.3,344.5L380.4,322.6Z"/>
<path fill="#213856" fill-rule="evenodd" d="M399.5,550.3L377.3,546.6L377.3,344.5L399.5,348.1Z"/>
<path fill="#3e6ba4" fill-rule="evenodd" d="M424.8,278.4L414.9,280.4L410.7,262L414.1,261.3Z"/>
<path fill="#335888" fill-rule="evenodd" d="M536.1,141.5L514.3,138L513.1,136.1L532.5,135.8Z"/>
<path fill="#335887" fill-rule="evenodd" d="M418.5,571.7L414.9,572.3L404.3,572.5L402,572Z"/>
<path fill="#3d68a0" fill-rule="evenodd" d="M418.5,302.3L402,302.6L404.3,280.6L414.9,280.4Z"/>
<path fill="#233b5c" fill-rule="evenodd" d="M549,141.8L532.5,135.8L526,131L538.8,134.3Z"/>
<path fill="#3b649a" fill-rule="evenodd" d="M433.2,274.6L424.8,278.4L414.1,261.3L417,260Z"/>
<path fill="#375f92" fill-rule="evenodd" d="M439.1,269.6L433.2,274.6L417,260L419,258.3Z"/>
<path fill="#365d8f" fill-rule="evenodd" d="M533.5,153.4L439.1,269.6L419,258.3L513.5,142.1Z"/>
<path fill="#264063" fill-rule="evenodd" d="M421.1,563.9L418.5,571.7L402,572L400.4,564.3Z"/>
<path fill="#335786" fill-rule="evenodd" d="M421.1,325.4L400.4,325.8L402,302.6L418.5,302.3Z"/>
<path fill="#355b8d" fill-rule="evenodd" d="M434,299L418.5,302.3L414.9,280.4L424.8,278.4Z"/>
<path fill="#213857" fill-rule="evenodd" d="M554.6,150.7L536.1,141.5L532.5,135.8L549,141.8Z"/>
<path fill="#162539" fill-rule="evenodd" d="M422.5,549.8L421.1,563.9L400.4,564.3L399.5,550.3Z"/>
<path fill="#253f62" fill-rule="evenodd" d="M422.5,347.6L399.5,348.1L400.4,325.8L421.1,325.4Z"/>
<path fill="#152438" fill-rule="evenodd" d="M422.5,549.8L399.5,550.3L399.5,348.1L422.5,347.6Z"/>
<path fill="#2e4f7a" fill-rule="evenodd" d="M447,293.2L434,299L424.8,278.4L433.2,274.6Z"/>
<path fill="#213958" fill-rule="evenodd" d="M555.2,160.1L536.5,147.6L536.1,141.5L554.6,150.7ZM444.1,545.3L440.6,559.8L421.1,563.9L422.5,549.8Z"/>
<path fill="#30517d" fill-rule="evenodd" d="M440.6,559.8L434,568.4L418.5,571.7L421.1,563.9Z"/>
<path fill="#29466b" fill-rule="evenodd" d="M440.6,321.4L421.1,325.4L418.5,302.3L434,299Z"/>
<path fill="#0e1825" fill-rule="evenodd" d="M568.1,164.6L554.6,150.7L549,141.8L561,153.4ZM462.3,335L444.1,343.1L440.6,321.4L457,314Z"/>
<path fill="#28456a" fill-rule="evenodd" d="M456.2,285.4L447,293.2L433.2,274.6L439.1,269.6Z"/>
<path fill="#243d5e" fill-rule="evenodd" d="M555.2,160.1L550.6,169.2L533.5,153.4L536.5,147.6Z"/>
<path fill="#264165" fill-rule="evenodd" d="M550.6,169.2L456.2,285.4L439.1,269.6L533.5,153.4Z"/>
<path fill="#192b43" fill-rule="evenodd" d="M444.1,343.1L422.5,347.6L421.1,325.4L440.6,321.4Z"/>
<path fill="#111e2e" fill-rule="evenodd" d="M444.1,545.3L422.5,549.8L422.5,347.6L444.1,343.1Z"/>
<path fill="#0d1723" fill-rule="evenodd" d="M568.8,176.5L555.2,160.1L554.6,150.7L568.1,164.6Z"/>
<path fill="#4270ad" fill-rule="evenodd" d="M468.6,542.6L456.2,554.8L447,562.6L457,552.5Z"/>
<path fill="#17273c" fill-rule="evenodd" d="M468.6,304.1L457,314L447,293.2L456.2,285.4Z"/>
<path fill="#101c2b" fill-rule="evenodd" d="M568.8,176.5L563.1,188L550.6,169.2L555.2,160.1Z"/>
<path fill="#142234" fill-rule="evenodd" d="M563.1,188L468.6,304.1L456.2,285.4L550.6,169.2Z"/>
<path fill="#2d4d76" fill-rule="evenodd" d="M462.3,537.2L457,552.5L440.6,559.8L444.1,545.3Z"/>
<path fill="#223958" fill-rule="evenodd" d="M575.9,195.2L568.8,176.5L568.1,164.6L575.1,182Z"/>
<path fill="#1d324d" fill-rule="evenodd" d="M462.3,537.2L444.1,545.3L444.1,343.1L462.3,335Z"/>
<path fill="#16263a" fill-rule="evenodd" d="M475.1,324.1L462.3,335L457,314L468.6,304.1Z"/>
<path fill="#3e6aa3" fill-rule="evenodd" d="M575.9,397.3L568.8,415L563.1,426.5L569.6,410Z"/>
<path fill="#1d324e" fill-rule="evenodd" d="M575.9,195.2L569.6,207.9L563.1,188L568.8,176.5Z"/>
<path fill="#3b649b" fill-rule="evenodd" d="M569.6,410L563.1,426.5L468.6,542.6L475.1,526.2Z"/>
<path fill="#1a2c44" fill-rule="evenodd" d="M569.6,207.9L475.1,324.1L468.6,304.1L563.1,188Z"/>
<path fill="#284468" fill-rule="evenodd" d="M475.1,526.2L462.3,537.2L462.3,335L475.1,324.1Z"/>
<path fill="#2f517d" fill-rule="evenodd" d="M575.9,397.3L569.6,410L569.6,207.9L575.9,195.2Z"/>
<path fill="#2c4b73" fill-rule="evenodd" d="M569.6,410L475.1,526.2L475.1,324.1L569.6,207.9ZM522.4,458.6L528.3,450.6L534.1,441.3L539.7,430.8L545.1,419.3L550.1,407L554.7,394L558.7,380.6L562.2,367L565.1,353.5L567.3,340.1L568.7,327.1L569.5,314.8L569.5,303.3L568.7,292.8L567.3,283.5L565.1,275.5L562.2,268.9L558.7,263.9L554.7,260.5L550.1,258.8L545.1,258.8L539.7,260.5L534.1,263.9L528.3,268.9L522.4,275.5L516.4,283.5L510.6,292.8L505,303.3L499.6,314.8L494.6,327.1L490,340.1L486,353.5L482.5,367L479.6,380.6L477.4,394L476,407L475.2,419.3L475.2,430.8L476,441.3L477.4,450.6L479.6,458.6L482.5,465.1L486,470.2L490,473.5L494.6,475.2L499.6,475.2L505,473.5L510.6,470.2L516.4,465.1Z"/>
</g>
<g id="axes">
<path fill="none" stroke="#1e1e1e" stroke-width="1" d="M205.5 0v201M205.5 526v3M205.5 532v3M205.5 538v3M205.5 544v3M205.5 550v3M205.5 556v3M205.5 562v3M205.5 568v3M205.5 574v3M205.5 580v3M205.5 586v3M205.5 592v3M205.5 598v3M205.5 604v3M205.5 610v3M205.5 616v3M205.5 622v3M205.5 628v3M205.5 634v3M205.5 640v3M205.5 646v3M488.5 95v3M519.5 57v3M576.5 543v3M566 0.5h1M566 1.5h1M565 2.5h1M564 3.5h1M563 4.5h1M562 5.5h1M562 6.5h1M561 7.5h1M560 8.5h1M559 9.5h1M181 10.5h1M558 10.5h1M182 11.5h3M558 11.5h1M185 12.5h4M527 12.5h4M557 12.5h1M189 13.5h4M531 13.5h4M556 13.5h1M193 14.5h4M535 14.5h4M555 14.5h1M197 15.5h3M539 15.5h3M554 15.5h1M200 16.5h4M542 16.5h4M553 16.5h1M204 17.5h1M546 17.5h4M553 17.5h1M550 18.5h3M551 19.5h1M550 20.5h1M549 21.5h1M549 22.5h1M548 23.5h1M547 24.5h1M546 25.5h1M545 26.5h1M545 27.5h1M544 28.5h1M543 29.5h1M542 30.5h1M512 31.5h2M541 31.5h1M514 32.5h4M540 32.5h1M518 33.5h3M540 33.5h1M521 34.5h4M539 34.5h1M525 35.5h4M538 35.5h1M529 36.5h4M537 36.5h1M533 37.5h4M536 38.5h1M535 39.5h1M534 40.5h1M181 41.5h2M533 41.5h1M183 42.5h4M532 42.5h1M187 43.5h4M532 43.5h1M191 44.5h4M471 44.5h3M531 44.5h1M195 45.5h3M474 45.5h4M530 45.5h1M198 46.5h4M478 46.5h4M529 46.5h1M202 47.5h3M482 47.5h4M528 47.5h1M486 48.5h3M527 48.5h1M489 49.5h4M527 49.5h1M493 50.5h4M526 50.5h1M497 51.5h4M525 51.5h1M501 52.5h3M524 52.5h1M504 53.5h4M523 53.5h1M508 54.5h4M523 54.5h1M512 55.5h4M522 55.5h1M516 56.5h3M521 56.5h1M520 57.5h1M518 60.5h1M517 61.5h1M516 62.5h1M515 63.5h1M514 64.5h1M514 65.5h1M513 66.5h1M512 67.5h1M511 68.5h1M510 69.5h1M480 70.5h3M510 70.5h1M181 71.5h1M483 71.5h4M509 71.5h1M182 72.5h3M487 72.5h4M508 72.5h1M185 73.5h4M491 73.5h4M507 73.5h1M189 74.5h4M495 74.5h3M506 74.5h1M193 75.5h4M498 75.5h4M506 75.5h1M197 76.5h3M502 76.5h4M200 77.5h4M504 77.5h1M204 78.5h1M503 78.5h1M502 79.5h1M501 80.5h1M501 81.5h1M500 82.5h1M499 83.5h1M498 84.5h1M497 85.5h1M497 86.5h1M496 87.5h1M495 88.5h1M465 89.5h1M494 89.5h1M466 90.5h4M493 90.5h1M470 91.5h4M492 91.5h1M474 92.5h4M492 92.5h1M478 93.5h3M491 93.5h1M481 94.5h4M490 94.5h1M485 95.5h3M489 95.5h1M487 98.5h1M486 99.5h1M485 100.5h1M484 101.5h1M181 102.5h2M484 102.5h1M183 103.5h4M483 103.5h1M187 104.5h4M482 104.5h1M191 105.5h4M481 105.5h1M195 106.5h3M480 106.5h1M198 107.5h4M479 107.5h1M202 108.5h3M479 108.5h1M452 109.5h1M478 109.5h1M456 110.5h1M477 110.5h1M460 111.5h1M476 111.5h1M463 112.5h1M475 112.5h1M467 113.5h1M475 113.5h1M471 114.5h1M474 114.5h1M156 126.5h3M159 127.5h4M163 128.5h4M167 129.5h3M170 130.5h4M174 131.5h4M178 132.5h3M181 133.5h4M185 134.5h4M189 135.5h4M193 136.5h3M196 137.5h4M200 138.5h4M204 139.5h1M181 163.5h2M183 164.5h4M187 165.5h4M191 166.5h4M195 167.5h3M198 168.5h4M202 169.5h3M419 181.5h1M419 182.5h1M418 183.5h1M417 184.5h1M416 185.5h1M386 186.5h2M415 186.5h1M388 187.5h4M414 187.5h1M392 188.5h4M414 188.5h1M396 189.5h4M413 189.5h1M400 190.5h3M412 190.5h1M403 191.5h4M411 191.5h1M407 192.5h4M410 193.5h1M181 194.5h4M409 194.5h1M185 195.5h4M408 195.5h1M189 196.5h4M407 196.5h1M193 197.5h3M406 197.5h1M196 198.5h4M406 198.5h1M200 199.5h4M405 199.5h1M204 200.5h1M404 200.5h1M403 201.5h1M402 202.5h1M401 203.5h1M401 204.5h1M370 205.5h1M400 205.5h1M371 206.5h4M399 206.5h1M375 207.5h4M398 207.5h1M379 208.5h3M397 208.5h1M382 209.5h4M397 209.5h1M386 210.5h4M396 210.5h1M390 211.5h4M395 211.5h1M394 212.5h1M393 213.5h1M392 214.5h1M392 215.5h1M391 216.5h1M390 217.5h1M389 218.5h1M388 219.5h1M388 220.5h1M387 221.5h1M386 222.5h1M385 223.5h1M384 224.5h1M354 225.5h4M384 225.5h1M358 226.5h4M383 226.5h1M362 227.5h3M382 227.5h1M365 228.5h4M381 228.5h1M369 229.5h4M380 229.5h1M373 230.5h4M379 230.5h1M377 231.5h3M378 232.5h1M228 379.5h1M231 380.5h3M235 381.5h1M238 382.5h3M241 383.5h2M246 384.5h2M248 385.5h3M251 386.5h3M2 390.5h3M8 391.5h1M9 392.5h2M0 393.5h1M14 393.5h2M0 394.5h1M16 394.5h1M20 395.5h3M26 396.5h2M28 397.5h1M32 398.5h3M38 399.5h1M39 400.5h2M44 401.5h2M46 402.5h1M33 403.5h1M50 403.5h3M33 404.5h1M56 404.5h2M32 405.5h1M58 405.5h1M62 406.5h3M68 407.5h1M69 408.5h2M28 409.5h1M74 409.5h2M28 410.5h1M76 410.5h1M27 411.5h1M80 411.5h3M67 412.5h1M86 412.5h1M66 413.5h1M87 413.5h2M65 414.5h1M92 414.5h3M98 415.5h1M99 416.5h2M104 417.5h2M62 418.5h1M106 418.5h1M61 419.5h1M110 419.5h3M61 420.5h1M116 420.5h1M101 421.5h1M117 421.5h2M100 422.5h1M122 422.5h3M99 423.5h1M128 423.5h1M129 424.5h2M96 427.5h1M95 428.5h1M94 429.5h1M130 436.5h1M129 437.5h1M128 438.5h1M300 469.5h1M304 469.5h1M307 470.5h1M307 471.5h1M310 471.5h1M311 472.5h1M150 477.5h3M156 478.5h2M158 479.5h1M162 480.5h3M168 481.5h1M169 482.5h2M173 484.5h1M172 485.5h1M171 486.5h1M168 490.5h1M167 491.5h1M166 492.5h1M135 496.5h2M163 496.5h1M137 497.5h1M162 497.5h1M141 498.5h3M162 498.5h1M147 499.5h1M148 500.5h2M153 501.5h3M158 502.5h1M158 503.5h1M157 504.5h1M153 508.5h1M153 509.5h1M152 510.5h1M149 514.5h1M119 515.5h1M148 515.5h1M120 516.5h2M147 516.5h1M475 516.5h1M125 517.5h3M475 517.5h5M474 518.5h1M480 518.5h4M131 519.5h3M473 519.5h1M484 519.5h4M137 520.5h2M144 520.5h1M473 520.5h1M488 520.5h3M139 521.5h1M143 521.5h1M205 521.5h1M472 521.5h1M491 521.5h4M142 522.5h1M205 522.5h1M471 522.5h1M495 522.5h4M470 523.5h1M499 523.5h4M469 524.5h1M503 524.5h3M468 525.5h1M506 525.5h4M139 526.5h1M468 526.5h1M509 526.5h5M138 527.5h1M467 527.5h1M508 527.5h1M514 527.5h3M137 528.5h1M466 528.5h1M507 528.5h1M517 528.5h4M182 529.5h1M465 529.5h1M506 529.5h1M521 529.5h4M183 530.5h2M464 530.5h1M506 530.5h1M525 530.5h4M188 531.5h2M505 531.5h1M529 531.5h3M134 532.5h1M190 532.5h1M504 532.5h1M532 532.5h4M133 533.5h1M194 533.5h3M503 533.5h1M536 533.5h4M132 534.5h1M200 534.5h1M502 534.5h1M540 534.5h4M103 535.5h3M201 535.5h2M501 535.5h1M543 535.5h4M109 536.5h1M501 536.5h1M542 536.5h1M547 536.5h4M110 537.5h2M500 537.5h1M541 537.5h1M551 537.5h4M115 538.5h3M129 538.5h1M499 538.5h1M540 538.5h1M555 538.5h4M121 539.5h1M128 539.5h1M498 539.5h1M539 539.5h1M559 539.5h3M122 540.5h2M127 540.5h1M538 540.5h1M562 540.5h4M538 541.5h1M566 541.5h4M537 542.5h1M570 542.5h4M536 543.5h1M574 543.5h2M124 544.5h1M535 544.5h1M577 544.5h4M123 545.5h1M534 545.5h1M581 545.5h4M123 546.5h1M534 546.5h1M575 546.5h1M585 546.5h3M533 547.5h1M574 547.5h1M588 547.5h4M532 548.5h1M573 548.5h1M592 548.5h4M531 549.5h1M572 549.5h1M596 549.5h4M119 550.5h1M530 550.5h1M571 550.5h1M600 550.5h3M119 551.5h1M530 551.5h1M571 551.5h1M603 551.5h4M118 552.5h1M529 552.5h1M570 552.5h1M607 552.5h4M528 553.5h1M569 553.5h1M610 553.5h5M87 554.5h3M527 554.5h1M568 554.5h1M609 554.5h1M615 554.5h3M526 555.5h1M567 555.5h1M608 555.5h1M618 555.5h4M93 556.5h3M114 556.5h1M525 556.5h1M567 556.5h1M608 556.5h1M622 556.5h4M99 557.5h2M114 557.5h1M525 557.5h1M566 557.5h1M607 557.5h1M626 557.5h4M101 558.5h1M113 558.5h1M524 558.5h1M606 558.5h1M630 558.5h3M105 559.5h3M523 559.5h1M605 559.5h1M633 559.5h2M182 560.5h2M522 560.5h1M604 560.5h1M184 561.5h1M521 561.5h1M604 561.5h1M110 562.5h1M188 562.5h3M521 562.5h1M603 562.5h1M109 563.5h1M194 563.5h2M602 563.5h1M108 564.5h1M196 564.5h1M601 564.5h1M200 565.5h3M600 565.5h1M600 566.5h1M105 568.5h1M104 569.5h1M103 570.5h1M72 574.5h3M100 574.5h1M634 574.5h1M78 575.5h2M99 575.5h1M633 575.5h1M80 576.5h1M98 576.5h1M84 577.5h3M90 578.5h1M91 579.5h2M95 580.5h1M94 581.5h1M93 582.5h1M90 586.5h1M89 587.5h1M88 588.5h1M182 590.5h1M183 591.5h2M85 592.5h1M188 592.5h2M56 593.5h3M84 593.5h1M190 593.5h1M62 594.5h1M84 594.5h1M194 594.5h3M63 595.5h2M200 595.5h1M68 596.5h2M201 596.5h2M70 597.5h1M74 598.5h3M80 598.5h1M80 599.5h1M79 600.5h1M75 604.5h1M75 605.5h1M74 606.5h1M71 610.5h1M70 611.5h1M40 612.5h2M69 612.5h1M42 613.5h1M46 614.5h3M52 615.5h1M53 616.5h2M66 616.5h1M58 617.5h3M65 617.5h1M64 618.5h1M182 621.5h2M61 622.5h1M184 622.5h1M60 623.5h1M188 623.5h3M59 624.5h1M194 624.5h2M0 625.5h2M196 625.5h1M2 626.5h1M200 626.5h3M6 627.5h3M12 628.5h2M56 628.5h1M14 629.5h1M55 629.5h1M18 630.5h3M54 630.5h1M24 631.5h1M25 632.5h2M30 633.5h2M32 634.5h1M51 634.5h1M36 635.5h3M50 635.5h1M42 636.5h2M49 636.5h1M44 637.5h1M46 640.5h1M45 641.5h1M45 642.5h1M41 646.5h1M40 647.5h1M40 648.5h1"/>
<text transform="matrix(-0.000 2.635 -3.391 -0.907 212.1 121.6)" font-family="'DejaVu Sans','Liberation Sans',sans-serif" font-weight="200" font-size="10" fill="#1e1e1e">1<tspan dx="-1.73">0</tspan></text>
<text transform="matrix(-1.359 1.672 -3.391 -0.907 539.3 43.8)" font-family="'DejaVu Sans','Liberation Sans',sans-serif" font-weight="200" font-size="10" fill="#1e1e1e">20</text>
<text transform="matrix(2.915 0.780 -1.581 1.945 530.9 527.3)" font-family="'DejaVu Sans','Liberation Sans',sans-serif" font-weight="200" font-size="10" fill="#1e1e1e">1<tspan dx="2.50">0</tspan></text>
<text transform="matrix(-1.359 1.672 -3.391 -0.907 57.0 637.0)" font-family="'DejaVu Sans','Liberation Sans',sans-serif" font-weight="200" font-size="10" fill="#1e1e1e"><tspan dy="-1.7">-</tspan><tspan dy="1.7">10</tspan></text>
</g>
<g id="gizmo">
<path fill="none" stroke="#ff0000" stroke-width="1" d="M63 585.5h1M64 586.5h4M68 587.5h3M71 588.5h4M75 589.5h4M79 590.5h4M83 591.5h3M86 592.5h4M90 593.5h4M94 594.5h2"/>
<path fill="none" stroke="#00ff00" stroke-width="1" d="M78 567.5h1M77 568.5h1M76 569.5h1M76 570.5h1M75 571.5h1M74 572.5h1M73 573.5h1M72 574.5h1M71 575.5h1M71 576.5h1M70 577.5h1M69 578.5h1M68 579.5h1M67 580.5h1M67 581.5h1M66 582.5h1M65 583.5h1M64 584.5h1M63 585.5h1"/>
<path fill="none" stroke="#0000ff" stroke-width="1" d="M63.5 556v30"/>
<text x="103.5" y="600" text-anchor="middle" font-family="'Liberation Sans','DejaVu Sans',sans-serif" font-size="9.6" fill="#000">X</text>
<text x="82.5" y="567" text-anchor="middle" font-family="'Liberation Sans','DejaVu Sans',sans-serif" font-size="9.6" fill="#000">Y</text>
<text x="64.5" y="554" text-anchor="middle" font-family="'Liberation Sans','DejaVu Sans',sans-serif" font-size="9.6" fill="#000">Z</text>
</g>
</svg>
</div><!--/view-->
<!-- console -->
<div class="t" style="left:648px;top:744px">Konsole</div>
<div id="conbox" class="abs"></div>
<div class="t con" style="top:762px;letter-spacing:-0.24px">CGAL cache size in bytes: 0</div>
<div class="t con" style="top:778px">Compiling design (CSG Products normalization)...</div>
<div class="t con" style="top:794px;letter-spacing:0.14px">Normalized tree has 4 elements!</div>
<div class="t con" style="top:810px;letter-spacing:0.15px">Compile and preview finished.</div>
<div class="t con" style="top:826px;letter-spacing:0.14px">Total rendering time: 0:00:00.033</div>
<!-- status bar -->
<div class="t" style="left:2px;top:868px;letter-spacing:-0.035px">Ansicht: Verschiebung = [ 1.94 2.93 2.62 ], Rotation = [ 55.00 0.00 25.00 ], Abstand = 43.93, Sichtfeld = 22.50 (635x651)</div>
<div class="t" style="left:1062px;top:868px">OpenSCAD 2021.01 (git 41f58fe)</div>
<div id="shadow" class="abs"></div>
<!--ICONS-->
<svg class="abs" style="left:0;top:64px;will-change:transform" width="400" height="38" viewBox="0 64 400 38">
<!-- new -->
<path d="M18.6 75.9H23.8Q25.2 75.9 25.2 77.3V88.4Q25.2 89.8 23.8 89.8H16.3Q14.9 89.8 14.9 88.4V80.1Z" fill="none" stroke="#2a2a2a" stroke-width="1.35" stroke-linejoin="round"/>
<path d="M18.9 76.3V80.2H15.2Z" fill="#3a3a3a"/>
<path d="M20.4 81.5l.7 1.5 1.6-.6-.6 1.6 1.5.7-1.5.7.6 1.6-1.6-.6-.7 1.5-.7-1.5-1.6.6.6-1.6-1.5-.7 1.5-.7-.6-1.6 1.6.6z" fill="#2a2a2a"/>
<circle cx="20.4" cy="84.7" r="2.1" fill="#2a2a2a"/>
<!-- open -->
<path d="M44 77.5h5.3l1.2 1.5h3v1.6H44z" fill="#242424"/>
<rect x="44" y="82" width="14" height="7" fill="#242424"/>
<path d="M52.6 82.4C53.8 80.4 55.4 80.1 58.3 80.1" fill="none" stroke="#242424" stroke-width="1.7"/>
<path d="M58 77.2l4.1 3.1-4.1 3.1z" fill="#242424"/>
<path d="M54.5 81.2h3.6v1.3h-4.4z" fill="#9a9a9a"/>
<!-- save -->
<path d="M79.4 75.4H92.8Q93.5 75.4 93.5 76.1V89.7Q93.5 90.4 92.8 90.4H79.4Q78.7 90.4 78.7 89.7V76.1Q78.7 75.4 79.4 75.4Z" fill="#242424"/>
<rect x="81" y="75" width="10" height="5" fill="#efefef"/>
<rect x="83" y="75.4" width="1.6" height="3.2" fill="#242424"/>
<rect x="81" y="87" width="10" height="2" fill="#b4b4b4"/>
<!-- separator -->
<rect x="106" y="74" width="1" height="19" fill="#d5d5d5"/><rect x="107" y="74" width="1" height="19" fill="#fff"/>
<!-- undo -->
<path d="M133.6 87.8V86A6.8 6.8 0 0 0 120.3 84" fill="none" stroke="#161616" stroke-width="2.6"/>
<path d="M117.1 80.1V87.8H124.3Z" fill="#161616"/>
<!-- redo -->
<path d="M151.4 87.8V86A6.8 6.8 0 0 1 164.7 84" fill="none" stroke="#161616" stroke-width="2.6"/>
<path d="M167.9 80.1V87.8H160.7Z" fill="#161616"/>
<!-- unindent -->
<g fill="#6e6e6e"><rect x="182.9" y="77" width="9.2" height="1.9"/><rect x="193.7" y="77" width="4.3" height="1.9"/><rect x="182.9" y="87" width="9.2" height="1.9"/><rect x="193.7" y="87" width="4.3" height="1.9"/></g>
<g fill="#4a4a4a"><rect x="182.9" y="80.6" width="9.2" height="1.4"/><rect x="186" y="83.7" width="6.1" height="1.4"/></g>
<path d="M201 83.1H194.5M197.2 80.2L194 83.1L197.2 86" fill="none" stroke="#1a1a1a" stroke-width="1.7"/>
<!-- indent -->
<g fill="#6e6e6e"><rect x="219.1" y="77" width="4.4" height="1.9"/><rect x="224.9" y="77" width="9.1" height="1.9"/><rect x="219.1" y="87" width="4.4" height="1.9"/><rect x="224.9" y="87" width="9.1" height="1.9"/></g>
<g fill="#4a4a4a"><rect x="224.9" y="80.6" width="9.1" height="1.4"/><rect x="224.9" y="83.7" width="6.1" height="1.4"/></g>
<path d="M216 83.1H222.6M219.9 80.2L223.1 83.1L219.9 86" fill="none" stroke="#1a1a1a" stroke-width="1.7"/>
<!-- separator -->
<rect x="245" y="74" width="1" height="19" fill="#d5d5d5"/><rect x="246" y="74" width="1" height="19" fill="#fff"/>
<g transform="translate(0 0)">
<path d="M264.5 71.8L273.4 76.9V86.2L264.5 91.3L255.9 86.2V76.9ZM256.2 77L264.5 81.2L273.2 77M264.5 81.2V90" fill="none" stroke="#2a2a2a" stroke-width="1.25" stroke-dasharray="1.6 1.6" stroke-linejoin="round"/>
<path d="M257.6 84.6H263.2L268 90L263.2 95.4H257.6L262.4 90ZM263.3 84.6H268.7L273.5 90L268.7 95.4H263.3L268.1 90Z" fill="#efefef"/>
<path d="M258.8 85.3H262.3L266.1 90L262.3 94.8H258.8L262.6 90ZM264.3 85.3H267.8L271.6 90L267.8 94.8H264.3L268.1 90Z" fill="#0a0a0a"/>
</g>
<g transform="translate(0 0)">
<path d="M297.6 71.4L306.6 76.7V87.1L297.6 92.3L289.6 87.1V76.7ZM289.8 76.8L297.6 81.3L306.4 76.8M297.6 81.3V85.5" fill="none" stroke="#222" stroke-width="1.3" stroke-linejoin="round"/>
<rect x="293.6" y="84.8" width="8" height="10.8" fill="#efefef"/>
<path d="M294.8 85.7H300.9V87H294.8ZM294.8 93.4H300.9V94.9H294.8Z" fill="#1c1c1c"/>
<path d="M295.4 87.6H300.3L297.85 90.3Z" fill="#1c1c1c"/>
<path d="M297.85 90.2L300.4 93.2H295.3Z" fill="#9a9a9a"/>
<path d="M295.3 87.3L300.4 93.2M300.4 87.3L295.3 93.2" stroke="#444" stroke-width="0.7" fill="none"/>
</g>
<!-- separator -->
<rect x="318" y="74" width="1" height="19" fill="#d5d5d5"/><rect x="319" y="74" width="1" height="19" fill="#fff"/>
<path d="M332.4 82.8V77.3L336.8 72.3H342.4Q343.5 72.3 343.5 73.4V82.8" fill="none" stroke="#222" stroke-width="1.4" stroke-linejoin="round"/>
<path d="M337 73V77.3H333.2Z" fill="#2a2a2a"/>
<text x="338.6" y="92.5" text-anchor="middle" font-family="'Liberation Sans','DejaVu Sans',sans-serif" font-weight="bold" font-size="10.2" fill="#0c0c0c" stroke="#0c0c0c" stroke-width="0.55" letter-spacing="0.3">STL</text>
<rect x="368.2" y="71.9" width="5.5" height="1.3" fill="#222"/>
<path d="M369.1 73.8H372.9V76.5Q372.9 78.3 371 78.5Q369.1 78.3 369.1 76.5Z" fill="#1a1a1a"/>
<path d="M371 78.3L371.6 79.6V82" fill="none" stroke="#444" stroke-width="0.9"/>
<path d="M363.3 82.1H377.6V90.4L370.4 93.9L363.3 90.4ZM363.5 82.3L370.4 85.9L377.4 82.3M370.4 85.9V93.7" fill="none" stroke="#555" stroke-width="1.15" stroke-linejoin="round"/>

</svg>

<svg class="abs" style="left:644px;top:696px;will-change:transform" width="634" height="44" viewBox="644 696 634 44">
<g transform="translate(399.1 631.6)">
<path d="M264.5 71.8L273.4 76.9V86.2L264.5 91.3L255.9 86.2V76.9ZM256.2 77L264.5 81.2L273.2 77M264.5 81.2V90" fill="none" stroke="#2a2a2a" stroke-width="1.25" stroke-dasharray="1.6 1.6" stroke-linejoin="round"/>
<path d="M257.6 84.6H263.2L268 90L263.2 95.4H257.6L262.4 90ZM263.3 84.6H268.7L273.5 90L268.7 95.4H263.3L268.1 90Z" fill="#efefef"/>
<path d="M258.8 85.3H262.3L266.1 90L262.3 94.8H258.8L262.6 90ZM264.3 85.3H267.8L271.6 90L267.8 94.8H264.3L268.1 90Z" fill="#0a0a0a"/>
</g>
<g transform="translate(399.1 631.7)">
<path d="M297.6 71.4L306.6 76.7V87.1L297.6 92.3L289.6 87.1V76.7ZM289.8 76.8L297.6 81.3L306.4 76.8M297.6 81.3V85.5" fill="none" stroke="#222" stroke-width="1.3" stroke-linejoin="round"/>
<rect x="293.6" y="84.8" width="8" height="10.8" fill="#efefef"/>
<path d="M294.8 85.7H300.9V87H294.8ZM294.8 93.4H300.9V94.9H294.8Z" fill="#1c1c1c"/>
<path d="M295.4 87.6H300.3L297.85 90.3Z" fill="#1c1c1c"/>
<path d="M297.85 90.2L300.4 93.2H295.3Z" fill="#9a9a9a"/>
<path d="M295.3 87.3L300.4 93.2M300.4 87.3L295.3 93.2" stroke="#444" stroke-width="0.7" fill="none"/>
</g>
<rect x="717" y="706" width="1" height="19" fill="#d5d5d5"/><rect x="718" y="706" width="1" height="19" fill="#fff"/>
<path d="M728.7 709.6V705.8H732.6M738.5 705.8H742.2V709.6M728.7 715.3V719H732.2M742.2 715.3V719" fill="none" stroke="#111" stroke-width="1.6"/>
<path d="M728 705.1h3.2l-3.2 3zM742.9 705.1h-3.2l3.2 3zM728 719.7h3l-3-2.8z" fill="#111"/>
<circle cx="735.3" cy="712.3" r="4.65" fill="#efefef" stroke="#1c1c1c" stroke-width="2.2"/><path d="M738.5 716.1999999999999L743 721.7" stroke="#1c1c1c" stroke-width="2.7" fill="none"/>
<circle cx="768.3" cy="712.4" r="4.65" fill="#efefef" stroke="#1c1c1c" stroke-width="2.2"/><path d="M771.5 716.3L776 721.7" stroke="#1c1c1c" stroke-width="2.7" fill="none"/><path d="M765.8 712.4H770.8M768.3 709.9V714.9" stroke="#1c1c1c" stroke-width="1" fill="none"/>
<circle cx="801.3" cy="712.4" r="4.65" fill="#efefef" stroke="#1c1c1c" stroke-width="2.2"/><path d="M804.5 716.3L809 721.7" stroke="#1c1c1c" stroke-width="2.7" fill="none"/><path d="M798.7 712.4H803.9" stroke="#1c1c1c" stroke-width="1.1" fill="none"/>
<path d="M828.5 716.4A7.8 7.8 0 1 0 831.2 709" fill="none" stroke="#0e0e0e" stroke-width="2.3"/>
<path d="M828.1 706.9L827 713.2L833.7 711.5Z" fill="#0e0e0e"/>
<rect x="856" y="706" width="1" height="19" fill="#d5d5d5"/><rect x="857" y="706" width="1" height="19" fill="#fff"/>
<path d="M867.3 713L870.5 706.3L878.5 706.5L880.5 713.5L877.8 720L870 719.6ZM867.3 713H875.8M875.8 713L878.5 706.5M875.8 713L877.8 720" fill="none" stroke="#333" stroke-width="1.3" stroke-linejoin="round"/>
<path d="M867.5 713H875.6" stroke="#333" stroke-width="1.8"/>
<path d="M880 710.7Q881.6 712.9 884.9 713.5Q881.6 714.1 880 716.3Z" fill="#000"/>
<path d="M908.9 708.7L915.6 710.9V718.8L908.9 721.9L902.1999999999999 718.8V710.9ZM902.2 710.9L908.9 713.7L915.6 710.9M908.9 713.7V721.9" fill="none" stroke="#2e2e2e" stroke-width="1.3" stroke-linejoin="round"/>
<path d="M908.9 713.9V721.7" stroke="#333" stroke-width="1.9"/>
<path d="M906 709.5Q908.3 708 908.9 704.2Q909.5 708 911.8 709.5Z" fill="#000"/>
<path d="M940.3 705.6L947.3 708.5V716.3L940.3 718.6L933.3 716.3V708.5ZM933.3 716.3L940.3 713.4L947.3 716.3M940.3 713.4V705.6" fill="none" stroke="#2e2e2e" stroke-width="1.3" stroke-linejoin="round"/>
<path d="M940.3 705.8V713.2" stroke="#333" stroke-width="1.9"/>
<path d="M937.6 718Q939.8 719.3 940.4 723Q941 719.3 943.2 718Z" fill="#000"/>
<path d="M984.1 713L980.7 706.3L972.4 706.5L970.6 713.5L973 720L981 719.6ZM984.1 713H975.4M975.4 713L972.4 706.5M975.4 713L973 720" fill="none" stroke="#333" stroke-width="1.3" stroke-linejoin="round"/>
<path d="M983.9 713H975.6" stroke="#333" stroke-width="1.8"/>
<path d="M971.1 710.7Q969.5 712.9 966.1 713.5Q969.5 714.1 971.1 716.3Z" fill="#000"/>
<path d="M1008 707.8L1014.8 710.8V718.8L1008 722L1001.3 718.8V710.8Z" fill="#f6f6f6"/>
<path d="M1001.3 710.8L1008 713.6V722L1001.3 718.8Z" fill="#222"/>
<path d="M1008 707.8L1014.75 710.8V718.8L1008 722L1001.25 718.8V710.8ZM1001.3 710.8L1008 713.6L1014.8 710.8M1008 713.6V722" fill="none" stroke="#222" stroke-width="1.3" stroke-linejoin="round"/>
<path d="M1041.1 707.8L1048 710.8V718.8L1041.1 722L1034.3 718.8V710.8Z" fill="#f6f6f6"/>
<path d="M1041.1 707.8L1048 710.8V717.6L1041.1 714Z" fill="#222"/>
<path d="M1041.1 707.8L1047.9499999999998 710.8V718.8L1041.1 722L1034.25 718.8V710.8ZM1034.3 710.8L1041.1 714L1048 718.6M1041.1 707.8V722" fill="none" stroke="#222" stroke-width="1.3" stroke-linejoin="round"/>
<path d="M1041.1 714V721.8" stroke="#444" stroke-width="1.9"/>
<rect x="1061" y="706" width="1" height="19" fill="#d5d5d5"/><rect x="1062" y="706" width="1" height="19" fill="#fff"/>
<rect x="1073.4" y="714.2" width="9.2" height="8.3" fill="#f4f4f4" stroke="#000" stroke-width="1.5"/>
<path d="M1073.2 713.6L1090.4 706.2L1082.6 714.2M1090.4 706.2L1083 722.6" fill="none" stroke="#000" stroke-width="1.1" stroke-linejoin="round"/>
<path d="M1090.6 706L1087.6 708.2L1089.3 709.3Z" fill="#000"/>
<rect x="1098.5" y="700.5" width="31.0" height="30.0" rx="3.4" fill="#dcdcdc" stroke="#aeaeae" stroke-width="1"/>
<path d="M1112.2 708.7H1121.1V717.3H1112.2ZM1107.2 713.4L1112.2 708.7M1115.5 713.4L1121.1 708.7M1115.5 722.2L1121.1 717.3M1107.2 722.2L1112.2 717.3" fill="none" stroke="#0a0a0a" stroke-width="1.15"/>
<path d="M1107.2 713.4H1115.5V722.2H1107.2Z" fill="none" stroke="#0a0a0a" stroke-width="1.45"/>
<rect x="1134" y="706" width="1" height="19" fill="#d5d5d5"/><rect x="1135" y="706" width="1" height="19" fill="#fff"/>
<rect x="1138.5" y="700.5" width="31.0" height="30.0" rx="3.4" fill="#dcdcdc" stroke="#aeaeae" stroke-width="1"/>
<path d="M1153.8 714.8V704.9M1154 714.3H1164.7M1153.6 715L1146.3 721.8" fill="none" stroke="#222" stroke-width="1"/><circle cx="1153.9" cy="714.8" r="1.5" fill="#000"/>
<rect x="1171.5" y="700.5" width="31.0" height="30.0" rx="3.4" fill="#dcdcdc" stroke="#aeaeae" stroke-width="1"/>
<path d="M1186.5 704.4V714.5H1197.9" fill="none" stroke="#111" stroke-width="1.2"/>
<path d="M1186.5 706H1189M1186.5 708.7H1189M1186.5 711.4H1189M1189.6 714.5V712.8M1192.3 714.5V712.8M1195 714.5V712.8M1197.5 714.5V712.8" fill="none" stroke="#111" stroke-width="1"/>
<path d="M1186 715L1179.2 721.5" fill="none" stroke="#333" stroke-width="2" stroke-dasharray="0.9 0.9"/>
<path d="M1185.6 715.4L1179.6 721.1" fill="none" stroke="#333" stroke-width="0.8"/>
<text x="1193.3" y="723.1" text-anchor="middle" font-family="'Liberation Sans','DejaVu Sans',sans-serif" font-size="8.6" fill="#3a3a3a">10</text>
<path d="M1215.6 709.8H1224.3M1215.6 720.2H1224.3M1213.8 711.6V718.4M1226.1 711.6V718.4" fill="none" stroke="#555" stroke-width="1.2"/>
<g fill="#111"><circle cx="1213.8" cy="709.8" r="1.4"/><circle cx="1226.1" cy="709.8" r="1.4"/><circle cx="1213.8" cy="720.2" r="1.4"/><circle cx="1226.1" cy="720.2" r="1.4"/></g>
</svg>
<svg class="abs" style="left:0;top:0" width="1278" height="887" viewBox="0 0 1278 887">
<!-- window controls -->
<rect x="1199" y="11" width="6" height="2" fill="#2b2b2b"/>
<path d="M1230.9 9H1235V13.1ZM1229 10.9V15H1233.1Z" fill="#2b2b2b"/>
<circle cx="1262" cy="12" r="7" fill="#8fb26d"/>
<path d="M1258.9 8.9l6.2 6.2M1265.1 8.9l-6.2 6.2" stroke="#fff" stroke-width="1.5" fill="none"/>
<!-- dock close buttons -->
<g fill="none" stroke="#666" stroke-width="1"><rect x="625.5" y="49.5" width="10" height="10" rx="2"/><rect x="1266.5" y="745.5" width="10" height="10" rx="2"/></g>
<g fill="none" stroke="#686868" stroke-width="1.8"><path d="M628 52l5 5M633 52l-5 5M1269 748l5 5M1274 748l-5 5"/></g>
<!-- fold margin -->
<g fill="none" stroke="#000" stroke-width="1" shape-rendering="crispEdges">
<path d="M36.5 181V209M36.5 221V334.5H43M36.5 294.5H43M36.5 381V494.5H43"/>
<g fill="#fff"><rect x="31.5" y="169.5" width="11" height="11"/><rect x="31.5" y="209.5" width="11" height="11"/><rect x="31.5" y="369.5" width="11" height="11"/></g>
<path d="M33 174.5H40M33 214.5H40M33 374.5H40"/>
</g>
<!-- splitter handles -->
<g fill="#fff"><rect x="642" y="448" width="1" height="1"/><rect x="642" y="451" width="1" height="1"/><rect x="642" y="454" width="1" height="1"/><rect x="642" y="457" width="1" height="1"/><rect x="642" y="460" width="1" height="1"/><rect x="642" y="463" width="1" height="1"/><rect x="956" y="738" width="1" height="1"/><rect x="959" y="738" width="1" height="1"/><rect x="962" y="738" width="1" height="1"/><rect x="965" y="738" width="1" height="1"/><rect x="968" y="738" width="1" height="1"/><rect x="971" y="738" width="1" height="1"/></g>
<g fill="#aaa"><rect x="641" y="447" width="1" height="1"/><rect x="641" y="450" width="1" height="1"/><rect x="641" y="453" width="1" height="1"/><rect x="641" y="456" width="1" height="1"/><rect x="641" y="459" width="1" height="1"/><rect x="641" y="462" width="1" height="1"/><rect x="955" y="737" width="1" height="1"/><rect x="958" y="737" width="1" height="1"/><rect x="961" y="737" width="1" height="1"/><rect x="964" y="737" width="1" height="1"/><rect x="967" y="737" width="1" height="1"/><rect x="970" y="737" width="1" height="1"/></g>
<!-- console scrollbar -->
<rect x="1265" y="761" width="13" height="101" fill="#fbfbfb"/>
<rect x="1264.5" y="760.5" width="14" height="102" fill="none" stroke="#b4b4b4"/>
<rect x="1265" y="774" width="13" height="47" fill="#e0e0e0"/>
<path d="M1265 774.5H1278M1265 821.5H1278M1265 848.5H1278" stroke="#c4c4c4" fill="none"/>
<path d="M1267.2 768.9L1271.1 764.8L1275 768.9Z" fill="#444"/>
<path d="M1267 853L1271 857.1L1275 853Z" fill="#444"/>
<!-- size grip -->
<g fill="#b4b4b4"><rect x="1276" y="873" width="1" height="1"/><rect x="1276" y="876" width="1" height="1"/><rect x="1273" y="876" width="1" height="1"/><rect x="1276" y="879" width="1" height="1"/><rect x="1273" y="879" width="1" height="1"/><rect x="1270" y="879" width="1" height="1"/><rect x="1276" y="882" width="1" height="1"/><rect x="1273" y="882" width="1" height="1"/><rect x="1270" y="882" width="1" height="1"/><rect x="1267" y="882" width="1" height="1"/></g>
</svg>

<!--/ICONS-->
</body>
</html>
